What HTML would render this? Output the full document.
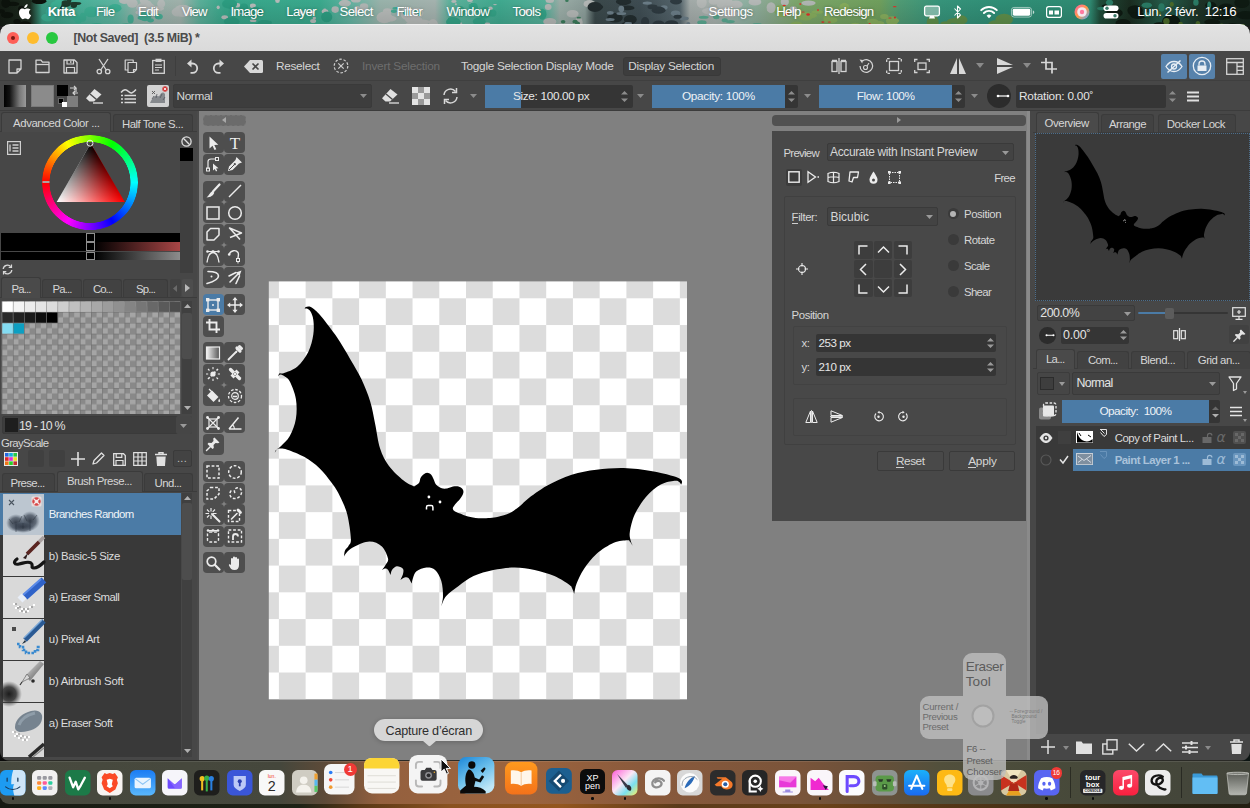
<!DOCTYPE html>
<html lang="fr">
<head>
<meta charset="utf-8">
<title>Krita</title>
<style>
*{box-sizing:border-box;margin:0;padding:0}
html,body{width:1250px;height:808px;overflow:hidden;background:#1c1c1c}
body{font-family:"Liberation Sans",sans-serif;font-size:12px;color:#dcdcdc;position:relative}
.abs{position:absolute}
#wall-top{left:0;top:0;width:1250px;height:26px;overflow:hidden;background:#2f8e76}
.menu{color:#fff;white-space:nowrap;text-shadow:0 0 3px rgba(0,0,0,.35)}
#titlebar{left:0;top:24px;width:1250px;height:27px;background:linear-gradient(180deg,#e2e2e2,#dadada);border-radius:10px 10px 0 0;border-top:1px solid #f0f0f0}
#title{left:73.5px;top:24.8px;height:27px;line-height:27px;font-weight:bold;font-size:12.4px;letter-spacing:-.4px;color:#4b4b4b;white-space:pre}
.tl{width:12px;height:12px;border-radius:50%;top:32px}
#tb1{left:0;top:51px;width:1250px;height:30px;background:#474747;border-bottom:1px solid #3f3f3f}
#tb2{left:0;top:81px;width:1250px;height:30px;background:#474747;border-bottom:1px solid #3c3c3c}
.t{white-space:nowrap;color:#d6d6d6}
#leftdock{left:0;top:111px;width:197px;height:651px;background:#474747}
#canvasarea{left:197px;top:111px;width:836px;height:651px;background:#808080}
#rightdock{left:1033px;top:111px;width:217px;height:651px;background:#474747}
#dockbg{left:0;top:762px;width:1250px;height:46px;background:linear-gradient(180deg,#4a4638 0,#3a382e 60%,#5a3a22 85%,#7a4a22 100%)}
svg{position:absolute;overflow:visible}
</style>
</head>
<body>
<!-- ============ macOS menu bar ============ -->
<div id="wall-top" class="abs"><svg style="left:0;top:0" width="1250" height="26" viewBox="0 0 1250 26"><defs><linearGradient id="wg" x1="0" x2="1250" gradientUnits="userSpaceOnUse"><stop offset="0.0000" stop-color="#141c14"/><stop offset="0.0240" stop-color="#1c2a1e"/><stop offset="0.0336" stop-color="#3a9a82"/><stop offset="0.0640" stop-color="#48b098"/><stop offset="0.0944" stop-color="#5fb4a0"/><stop offset="0.1080" stop-color="#8fb2a8"/><stop offset="0.1440" stop-color="#9fb0aa"/><stop offset="0.1600" stop-color="#5aae98"/><stop offset="0.1800" stop-color="#37a68a"/><stop offset="0.2560" stop-color="#3aa88c"/><stop offset="0.2800" stop-color="#62b2a0"/><stop offset="0.3040" stop-color="#98b2aa"/><stop offset="0.3480" stop-color="#a4b2ae"/><stop offset="0.3600" stop-color="#5cb09a"/><stop offset="0.4000" stop-color="#3fa88e"/><stop offset="0.4360" stop-color="#55ae98"/><stop offset="0.4480" stop-color="#9aaca6"/><stop offset="0.4680" stop-color="#8a9c98"/><stop offset="0.4760" stop-color="#3a484a"/><stop offset="0.5120" stop-color="#3e4c52"/><stop offset="0.5440" stop-color="#55656c"/><stop offset="0.5520" stop-color="#a2aaa8"/><stop offset="0.5720" stop-color="#a6b0ac"/><stop offset="0.5960" stop-color="#8fb0a2"/><stop offset="0.6120" stop-color="#8aa890"/><stop offset="0.6400" stop-color="#7aa468"/><stop offset="0.7040" stop-color="#6f9e5c"/><stop offset="0.7200" stop-color="#4f9a74"/><stop offset="0.7520" stop-color="#36937a"/><stop offset="0.8000" stop-color="#2f8e76"/><stop offset="0.8720" stop-color="#2f8a72"/><stop offset="0.8800" stop-color="#1f4a38"/><stop offset="0.9040" stop-color="#1a2c20"/><stop offset="0.9320" stop-color="#255c4a"/><stop offset="0.9600" stop-color="#1c3226"/><stop offset="1.0000" stop-color="#16241c"/></linearGradient><linearGradient id="wv" x1="0" y1="0" x2="0" y2="1"><stop offset="0" stop-color="#000" stop-opacity="0"/><stop offset="1" stop-color="#000" stop-opacity=".12"/></linearGradient></defs><rect width="1250" height="26" fill="url(#wg)"/><ellipse cx="13.0" cy="3.9" rx="6.3" ry="2.1" fill="#0c120c"/><ellipse cx="21.4" cy="9.5" rx="3.3" ry="3.7" fill="#0c120c"/><ellipse cx="1.5" cy="11.3" rx="3.3" ry="2.1" fill="#0c120c"/><ellipse cx="17.0" cy="21.5" rx="3.6" ry="2.6" fill="#0c120c"/><ellipse cx="25.1" cy="24.6" rx="5.9" ry="3.3" fill="#0c120c"/><ellipse cx="39.1" cy="1.2" rx="7.3" ry="2.9" fill="#0c120c"/><ellipse cx="5.8" cy="3.1" rx="4.5" ry="4.9" fill="#0c120c"/><ellipse cx="7.2" cy="15.1" rx="6.2" ry="3.2" fill="#0c120c"/><ellipse cx="69.2" cy="0.8" rx="2.2" ry="1.8" fill="#1e3a2c"/><ellipse cx="73.8" cy="5.1" rx="3.3" ry="3.0" fill="#1e3a2c"/><ellipse cx="65.9" cy="3.6" rx="5.2" ry="3.3" fill="#1e3a2c"/><ellipse cx="58.5" cy="6.9" rx="4.1" ry="3.8" fill="#1e3a2c"/><ellipse cx="75.5" cy="3.5" rx="5.9" ry="1.6" fill="#1e3a2c"/><ellipse cx="78.4" cy="19.7" rx="3.8" ry="3.7" fill="#3cae92"/><ellipse cx="48.1" cy="17.4" rx="6.8" ry="4.0" fill="#3cae92"/><ellipse cx="115.0" cy="8.2" rx="6.5" ry="4.1" fill="#3cae92"/><ellipse cx="91.4" cy="11.9" rx="7.2" ry="5.4" fill="#3cae92"/><ellipse cx="82.9" cy="17.3" rx="3.3" ry="4.5" fill="#3cae92"/><ellipse cx="96.8" cy="25.8" rx="7.1" ry="2.9" fill="#3cae92"/><ellipse cx="75.9" cy="17.4" rx="3.1" ry="3.6" fill="#3cae92"/><ellipse cx="58.4" cy="3.0" rx="3.3" ry="4.7" fill="#3cae92"/><ellipse cx="55.3" cy="6.4" rx="5.0" ry="5.1" fill="#3cae92"/><ellipse cx="51.4" cy="11.7" rx="5.7" ry="5.2" fill="#3cae92"/><ellipse cx="177.3" cy="12.1" rx="5.7" ry="4.3" fill="#b2b8b6"/><ellipse cx="145.1" cy="12.4" rx="9.7" ry="3.1" fill="#b2b8b6"/><ellipse cx="132.3" cy="3.2" rx="5.4" ry="4.6" fill="#b2b8b6"/><ellipse cx="161.2" cy="3.7" rx="4.0" ry="4.3" fill="#b2b8b6"/><ellipse cx="145.8" cy="7.9" rx="9.7" ry="5.6" fill="#b2b8b6"/><ellipse cx="156.1" cy="8.6" rx="8.1" ry="2.6" fill="#b2b8b6"/><ellipse cx="183.0" cy="10.9" rx="9.2" ry="6.1" fill="#b2b8b6"/><ellipse cx="147.5" cy="5.6" rx="4.6" ry="5.3" fill="#b2b8b6"/><ellipse cx="124.4" cy="0.9" rx="5.3" ry="3.1" fill="#b2b8b6"/><ellipse cx="143.8" cy="0.7" rx="4.0" ry="3.1" fill="#b2b8b6"/><ellipse cx="130.6" cy="19.0" rx="3.1" ry="4.5" fill="#46ac94"/><ellipse cx="158.8" cy="16.6" rx="4.0" ry="2.9" fill="#46ac94"/><ellipse cx="145.0" cy="16.4" rx="6.4" ry="4.9" fill="#46ac94"/><ellipse cx="150.6" cy="20.3" rx="3.3" ry="2.1" fill="#46ac94"/><ellipse cx="143.8" cy="17.9" rx="6.3" ry="2.3" fill="#46ac94"/><ellipse cx="126.3" cy="25.5" rx="5.1" ry="2.3" fill="#46ac94"/><ellipse cx="277.5" cy="0.7" rx="2.3" ry="2.4" fill="#b4bab8"/><ellipse cx="314.3" cy="18.1" rx="1.7" ry="1.3" fill="#b4bab8"/><ellipse cx="234.2" cy="20.1" rx="2.3" ry="2.0" fill="#b4bab8"/><ellipse cx="252.9" cy="5.8" rx="3.0" ry="2.4" fill="#b4bab8"/><ellipse cx="313.1" cy="21.0" rx="3.0" ry="2.0" fill="#b4bab8"/><ellipse cx="241.1" cy="13.5" rx="1.9" ry="0.7" fill="#b4bab8"/><ellipse cx="218.2" cy="7.3" rx="1.6" ry="1.9" fill="#b4bab8"/><ellipse cx="325.0" cy="11.6" rx="3.3" ry="2.4" fill="#b4bab8"/><ellipse cx="324.8" cy="9.5" rx="1.6" ry="1.0" fill="#b4bab8"/><ellipse cx="237.6" cy="5.3" rx="2.6" ry="2.3" fill="#b4bab8"/><ellipse cx="311.7" cy="12.5" rx="2.6" ry="2.1" fill="#b4bab8"/><ellipse cx="224.7" cy="17.2" rx="3.3" ry="2.0" fill="#b4bab8"/><ellipse cx="301.3" cy="12.4" rx="1.4" ry="2.1" fill="#b4bab8"/><ellipse cx="253.2" cy="20.8" rx="3.4" ry="1.3" fill="#b4bab8"/><ellipse cx="261.2" cy="24.6" rx="6.6" ry="2.4" fill="#2c9c80"/><ellipse cx="229.6" cy="3.9" rx="7.5" ry="4.9" fill="#2c9c80"/><ellipse cx="231.8" cy="21.5" rx="7.9" ry="4.3" fill="#2c9c80"/><ellipse cx="255.3" cy="14.3" rx="3.7" ry="1.9" fill="#2c9c80"/><ellipse cx="326.7" cy="16.9" rx="5.6" ry="5.3" fill="#2c9c80"/><ellipse cx="264.9" cy="22.7" rx="7.1" ry="2.6" fill="#2c9c80"/><ellipse cx="244.0" cy="7.6" rx="4.2" ry="4.0" fill="#2c9c80"/><ellipse cx="244.8" cy="10.9" rx="3.7" ry="5.3" fill="#2c9c80"/><ellipse cx="255.7" cy="11.9" rx="5.9" ry="5.2" fill="#2c9c80"/><ellipse cx="263.4" cy="23.9" rx="5.5" ry="3.8" fill="#2c9c80"/><ellipse cx="355.9" cy="0.2" rx="4.8" ry="2.4" fill="#b0b6b4"/><ellipse cx="335.2" cy="9.6" rx="3.7" ry="3.3" fill="#b0b6b4"/><ellipse cx="364.0" cy="6.7" rx="4.3" ry="3.4" fill="#b0b6b4"/><ellipse cx="357.2" cy="9.4" rx="3.4" ry="3.5" fill="#b0b6b4"/><ellipse cx="344.9" cy="3.3" rx="6.1" ry="3.4" fill="#b0b6b4"/><ellipse cx="413.7" cy="19.8" rx="8.6" ry="4.1" fill="#b6bab8"/><ellipse cx="416.8" cy="13.1" rx="6.6" ry="5.1" fill="#b6bab8"/><ellipse cx="407.1" cy="13.9" rx="6.4" ry="6.1" fill="#b6bab8"/><ellipse cx="422.0" cy="22.8" rx="8.7" ry="3.4" fill="#b6bab8"/><ellipse cx="413.6" cy="24.5" rx="8.2" ry="2.9" fill="#b6bab8"/><ellipse cx="387.3" cy="11.5" rx="4.4" ry="3.3" fill="#b6bab8"/><ellipse cx="384.4" cy="17.4" rx="7.9" ry="5.9" fill="#b6bab8"/><ellipse cx="389.3" cy="18.6" rx="7.3" ry="3.0" fill="#b6bab8"/><ellipse cx="433.0" cy="25.2" rx="5.1" ry="6.1" fill="#b6bab8"/><ellipse cx="406.9" cy="12.7" rx="4.0" ry="2.5" fill="#46aa92"/><ellipse cx="393.9" cy="11.2" rx="3.0" ry="1.7" fill="#46aa92"/><ellipse cx="395.8" cy="8.3" rx="3.4" ry="1.2" fill="#46aa92"/><ellipse cx="415.5" cy="11.5" rx="2.0" ry="1.7" fill="#46aa92"/><ellipse cx="419.3" cy="13.3" rx="2.1" ry="2.8" fill="#46aa92"/><ellipse cx="428.4" cy="25.3" rx="2.2" ry="1.6" fill="#46aa92"/><ellipse cx="449.0" cy="20.3" rx="1.7" ry="0.8" fill="#b2b8b6"/><ellipse cx="487.2" cy="23.7" rx="3.0" ry="1.1" fill="#b2b8b6"/><ellipse cx="459.9" cy="23.9" rx="2.4" ry="1.9" fill="#b2b8b6"/><ellipse cx="453.9" cy="1.5" rx="2.7" ry="1.4" fill="#b2b8b6"/><ellipse cx="452.2" cy="24.4" rx="2.6" ry="2.1" fill="#b2b8b6"/><ellipse cx="453.4" cy="22.3" rx="1.2" ry="2.2" fill="#b2b8b6"/><ellipse cx="490.4" cy="8.8" rx="2.4" ry="2.3" fill="#b2b8b6"/><ellipse cx="471.8" cy="3.4" rx="2.3" ry="1.0" fill="#b2b8b6"/><ellipse cx="455.9" cy="4.2" rx="1.1" ry="1.0" fill="#b2b8b6"/><ellipse cx="476.2" cy="7.9" rx="2.9" ry="1.1" fill="#b2b8b6"/><ellipse cx="495.0" cy="4.6" rx="1.9" ry="0.6" fill="#b2b8b6"/><ellipse cx="470.0" cy="0.4" rx="2.8" ry="1.6" fill="#b2b8b6"/><ellipse cx="463.9" cy="12.3" rx="3.3" ry="0.8" fill="#b2b8b6"/><ellipse cx="526.9" cy="11.2" rx="2.2" ry="2.1" fill="#b2b8b6"/><ellipse cx="484.3" cy="13.2" rx="6.4" ry="5.5" fill="#34a286"/><ellipse cx="479.3" cy="21.6" rx="6.5" ry="4.2" fill="#34a286"/><ellipse cx="485.5" cy="9.0" rx="3.3" ry="2.3" fill="#34a286"/><ellipse cx="452.1" cy="19.3" rx="4.3" ry="2.4" fill="#34a286"/><ellipse cx="453.4" cy="21.9" rx="7.4" ry="4.3" fill="#34a286"/><ellipse cx="473.2" cy="6.3" rx="4.5" ry="3.5" fill="#34a286"/><ellipse cx="460.8" cy="11.6" rx="4.3" ry="5.5" fill="#34a286"/><ellipse cx="542.3" cy="14.2" rx="4.2" ry="5.5" fill="#34a286"/><ellipse cx="476.0" cy="9.3" rx="3.0" ry="3.3" fill="#34a286"/><ellipse cx="492.5" cy="13.1" rx="4.0" ry="3.7" fill="#34a286"/><ellipse cx="548.2" cy="6.9" rx="3.4" ry="3.0" fill="#b2b6b4"/><ellipse cx="549.8" cy="0.6" rx="4.2" ry="2.5" fill="#b2b6b4"/><ellipse cx="572.6" cy="13.8" rx="6.0" ry="3.8" fill="#b2b6b4"/><ellipse cx="578.1" cy="22.9" rx="4.6" ry="2.8" fill="#b2b6b4"/><ellipse cx="589.4" cy="3.9" rx="5.9" ry="3.8" fill="#b2b6b4"/><ellipse cx="549.8" cy="21.7" rx="6.6" ry="3.7" fill="#b2b6b4"/><ellipse cx="578.8" cy="21.1" rx="3.6" ry="3.4" fill="#b2b6b4"/><ellipse cx="575.1" cy="21.7" rx="2.7" ry="1.9" fill="#3a7a5a"/><ellipse cx="577.5" cy="23.2" rx="2.5" ry="1.7" fill="#3a7a5a"/><ellipse cx="566.9" cy="0.8" rx="1.7" ry="1.3" fill="#3a7a5a"/><ellipse cx="563.1" cy="21.7" rx="2.3" ry="1.7" fill="#3a7a5a"/><ellipse cx="578.8" cy="17.7" rx="2.2" ry="0.9" fill="#3a7a5a"/><ellipse cx="630.3" cy="19.5" rx="6.5" ry="4.5" fill="#222c2e"/><ellipse cx="623.6" cy="1.7" rx="7.7" ry="3.4" fill="#222c2e"/><ellipse cx="595.6" cy="6.9" rx="7.6" ry="3.2" fill="#222c2e"/><ellipse cx="627.5" cy="25.4" rx="6.5" ry="3.9" fill="#222c2e"/><ellipse cx="615.0" cy="17.8" rx="7.8" ry="4.8" fill="#222c2e"/><ellipse cx="622.9" cy="2.0" rx="4.7" ry="3.4" fill="#222c2e"/><ellipse cx="627.7" cy="7.9" rx="6.8" ry="2.4" fill="#222c2e"/><ellipse cx="594.9" cy="7.0" rx="7.4" ry="5.1" fill="#222c2e"/><ellipse cx="664.1" cy="7.6" rx="3.5" ry="2.3" fill="#6a7c86"/><ellipse cx="647.3" cy="3.1" rx="4.7" ry="1.7" fill="#6a7c86"/><ellipse cx="688.3" cy="24.3" rx="2.1" ry="2.3" fill="#6a7c86"/><ellipse cx="675.6" cy="25.2" rx="3.3" ry="1.8" fill="#6a7c86"/><ellipse cx="626.8" cy="24.6" rx="2.6" ry="2.5" fill="#6a7c86"/><ellipse cx="621.3" cy="13.6" rx="4.9" ry="1.5" fill="#6a7c86"/><ellipse cx="675.6" cy="13.2" rx="4.7" ry="2.8" fill="#6a7c86"/><ellipse cx="628.5" cy="23.3" rx="3.5" ry="1.3" fill="#6a7c86"/><ellipse cx="610.3" cy="12.8" rx="3.4" ry="1.9" fill="#6a7c86"/><ellipse cx="621.3" cy="8.9" rx="2.9" ry="3.1" fill="#6a7c86"/><ellipse cx="610.1" cy="19.5" rx="4.5" ry="1.5" fill="#6a7c86"/><ellipse cx="684.1" cy="18.5" rx="4.7" ry="1.9" fill="#6a7c86"/><ellipse cx="658.6" cy="10.2" rx="7.0" ry="3.6" fill="#2e3a40"/><ellipse cx="658.0" cy="11.1" rx="4.1" ry="1.9" fill="#2e3a40"/><ellipse cx="645.1" cy="21.7" rx="4.1" ry="4.7" fill="#2e3a40"/><ellipse cx="652.5" cy="6.9" rx="5.0" ry="2.4" fill="#2e3a40"/><ellipse cx="658.7" cy="24.9" rx="6.5" ry="4.3" fill="#2e3a40"/><ellipse cx="671.5" cy="23.7" rx="6.8" ry="3.5" fill="#2e3a40"/><ellipse cx="676.0" cy="1.3" rx="5.9" ry="3.2" fill="#2e3a40"/><ellipse cx="677.6" cy="16.8" rx="4.1" ry="2.0" fill="#2e3a40"/><ellipse cx="754.9" cy="1.9" rx="6.4" ry="3.7" fill="#b4b8b6"/><ellipse cx="710.8" cy="11.1" rx="8.9" ry="3.4" fill="#b4b8b6"/><ellipse cx="735.9" cy="4.5" rx="6.8" ry="3.9" fill="#b4b8b6"/><ellipse cx="701.7" cy="2.4" rx="5.0" ry="5.9" fill="#b4b8b6"/><ellipse cx="724.8" cy="3.3" rx="8.5" ry="6.3" fill="#b4b8b6"/><ellipse cx="721.5" cy="2.1" rx="5.0" ry="2.8" fill="#b4b8b6"/><ellipse cx="713.9" cy="1.4" rx="5.2" ry="3.4" fill="#b4b8b6"/><ellipse cx="729.9" cy="13.3" rx="7.7" ry="4.0" fill="#b4b8b6"/><ellipse cx="724.8" cy="20.3" rx="3.1" ry="2.0" fill="#5aa890"/><ellipse cx="703.7" cy="17.3" rx="4.9" ry="1.5" fill="#5aa890"/><ellipse cx="730.2" cy="21.6" rx="4.6" ry="1.7" fill="#5aa890"/><ellipse cx="716.3" cy="17.0" rx="3.2" ry="2.2" fill="#5aa890"/><ellipse cx="757.2" cy="24.2" rx="4.6" ry="1.3" fill="#5aa890"/><ellipse cx="701.9" cy="22.5" rx="4.7" ry="2.3" fill="#5aa890"/><ellipse cx="844.3" cy="8.0" rx="5.0" ry="5.3" fill="#86ac5c"/><ellipse cx="876.5" cy="23.4" rx="7.9" ry="2.7" fill="#86ac5c"/><ellipse cx="779.7" cy="10.8" rx="5.6" ry="4.4" fill="#86ac5c"/><ellipse cx="892.1" cy="21.0" rx="6.2" ry="4.7" fill="#86ac5c"/><ellipse cx="826.7" cy="17.9" rx="3.2" ry="4.8" fill="#86ac5c"/><ellipse cx="796.4" cy="24.6" rx="6.2" ry="3.0" fill="#86ac5c"/><ellipse cx="782.3" cy="12.5" rx="6.2" ry="4.5" fill="#86ac5c"/><ellipse cx="780.1" cy="9.3" rx="5.6" ry="4.0" fill="#86ac5c"/><ellipse cx="817.4" cy="12.0" rx="6.0" ry="1.8" fill="#86ac5c"/><ellipse cx="805.7" cy="16.3" rx="7.8" ry="4.2" fill="#86ac5c"/><ellipse cx="884.3" cy="16.6" rx="4.2" ry="2.7" fill="#86ac5c"/><ellipse cx="894.7" cy="20.7" rx="4.5" ry="1.9" fill="#86ac5c"/><ellipse cx="832.3" cy="20.1" rx="5.1" ry="2.8" fill="#86ac5c"/><ellipse cx="855.1" cy="24.7" rx="4.1" ry="1.9" fill="#86ac5c"/><ellipse cx="810.6" cy="15.6" rx="6.4" ry="2.6" fill="#86ac5c"/><ellipse cx="872.6" cy="21.3" rx="5.5" ry="2.6" fill="#86ac5c"/><ellipse cx="808.5" cy="3.1" rx="7.1" ry="2.7" fill="#b0b6b2"/><ellipse cx="771.1" cy="7.6" rx="4.5" ry="5.4" fill="#b0b6b2"/><ellipse cx="784.8" cy="1.9" rx="4.1" ry="3.4" fill="#b0b6b2"/><ellipse cx="793.3" cy="9.5" rx="3.7" ry="3.3" fill="#b0b6b2"/><ellipse cx="770.6" cy="9.7" rx="3.7" ry="2.0" fill="#b0b6b2"/><ellipse cx="787.2" cy="12.7" rx="1.7" ry="1.2" fill="#e0302a"/><ellipse cx="867.9" cy="25.9" rx="1.7" ry="0.7" fill="#e0302a"/><ellipse cx="802.3" cy="24.6" rx="1.5" ry="0.5" fill="#e0302a"/><ellipse cx="859.7" cy="12.3" rx="1.2" ry="0.7" fill="#e0302a"/><ellipse cx="800.3" cy="4.1" rx="1.1" ry="0.8" fill="#e0302a"/><ellipse cx="894.7" cy="6.7" rx="1.8" ry="0.6" fill="#e0302a"/><ellipse cx="822.8" cy="22.1" rx="1.6" ry="0.8" fill="#e0302a"/><ellipse cx="785.9" cy="14.4" rx="1.2" ry="1.2" fill="#e0302a"/><ellipse cx="803.2" cy="12.0" rx="1.7" ry="0.5" fill="#e0302a"/><ellipse cx="829.3" cy="21.9" rx="1.6" ry="0.5" fill="#e0302a"/><ellipse cx="784.2" cy="5.4" rx="1.7" ry="0.7" fill="#e0302a"/><ellipse cx="869.7" cy="23.8" rx="1.1" ry="0.7" fill="#e0302a"/><ellipse cx="894.9" cy="17.6" rx="1.1" ry="1.0" fill="#e0302a"/><ellipse cx="818.0" cy="10.1" rx="0.8" ry="1.1" fill="#e0302a"/><ellipse cx="890.0" cy="17.9" rx="1.7" ry="0.5" fill="#e0302a"/><ellipse cx="808.1" cy="14.5" rx="1.8" ry="1.2" fill="#e0302a"/><ellipse cx="960.9" cy="20.0" rx="6.6" ry="4.7" fill="#5e8e4a"/><ellipse cx="1004.2" cy="19.5" rx="8.8" ry="5.8" fill="#5e8e4a"/><ellipse cx="995.8" cy="24.2" rx="7.6" ry="3.9" fill="#5e8e4a"/><ellipse cx="955.6" cy="20.9" rx="8.7" ry="2.8" fill="#5e8e4a"/><ellipse cx="945.8" cy="24.0" rx="5.5" ry="2.7" fill="#5e8e4a"/><ellipse cx="932.7" cy="22.4" rx="6.0" ry="6.9" fill="#5e8e4a"/><ellipse cx="1232.5" cy="25.7" rx="5.6" ry="2.8" fill="#0e1a12"/><ellipse cx="1114.5" cy="13.0" rx="8.3" ry="4.5" fill="#0e1a12"/><ellipse cx="1135.1" cy="10.8" rx="7.7" ry="5.5" fill="#0e1a12"/><ellipse cx="1212.2" cy="22.0" rx="8.0" ry="3.0" fill="#0e1a12"/><ellipse cx="1226.1" cy="7.6" rx="7.4" ry="4.1" fill="#0e1a12"/><ellipse cx="1210.7" cy="5.2" rx="5.5" ry="3.5" fill="#0e1a12"/><ellipse cx="1123.0" cy="23.0" rx="7.5" ry="3.9" fill="#0e1a12"/><ellipse cx="1159.4" cy="25.8" rx="7.0" ry="3.5" fill="#0e1a12"/><ellipse cx="1221.3" cy="17.0" rx="9.9" ry="2.9" fill="#0e1a12"/><ellipse cx="1171.2" cy="21.3" rx="9.0" ry="6.6" fill="#0e1a12"/><ellipse cx="1106.1" cy="7.6" rx="4.7" ry="3.3" fill="#0e1a12"/><ellipse cx="1245.9" cy="15.2" rx="9.6" ry="4.1" fill="#0e1a12"/><ellipse cx="1229.9" cy="11.7" rx="5.6" ry="6.0" fill="#0e1a12"/><ellipse cx="1241.9" cy="2.8" rx="7.6" ry="5.3" fill="#0e1a12"/><ellipse cx="1132.6" cy="9.6" rx="4.8" ry="3.3" fill="#0e1a12"/><ellipse cx="1138.2" cy="15.6" rx="7.9" ry="3.3" fill="#0e1a12"/><ellipse cx="1101.7" cy="8.5" rx="4.7" ry="1.8" fill="#2a7a64"/><ellipse cx="1146.8" cy="5.3" rx="5.2" ry="2.8" fill="#2a7a64"/><ellipse cx="1109.5" cy="2.6" rx="3.6" ry="2.9" fill="#2a7a64"/><ellipse cx="1195.9" cy="2.4" rx="2.7" ry="3.3" fill="#2a7a64"/><ellipse cx="1161.5" cy="7.4" rx="3.2" ry="4.1" fill="#2a7a64"/><ellipse cx="1146.9" cy="14.7" rx="3.4" ry="2.4" fill="#2a7a64"/><ellipse cx="1229.6" cy="25.9" rx="3.5" ry="1.8" fill="#2a7a64"/><ellipse cx="1209.2" cy="5.3" rx="2.0" ry="3.9" fill="#2a7a64"/><ellipse cx="1166.4" cy="21.3" rx="3.2" ry="3.2" fill="#4a6a2a"/><ellipse cx="1171.8" cy="4.2" rx="2.0" ry="2.5" fill="#4a6a2a"/><ellipse cx="1197.9" cy="23.7" rx="2.3" ry="2.6" fill="#4a6a2a"/><ellipse cx="1158.8" cy="13.1" rx="2.4" ry="1.9" fill="#4a6a2a"/><ellipse cx="1180.6" cy="24.1" rx="2.3" ry="2.3" fill="#4a6a2a"/><ellipse cx="1221.7" cy="25.1" rx="2.6" ry="1.5" fill="#4a6a2a"/><ellipse cx="1241.7" cy="25.4" rx="3.4" ry="1.3" fill="#4a6a2a"/><rect width="1250" height="26" fill="url(#wv)"/></svg></div>
<div id="menubar">
<svg style="left:18px;top:4px" width="14" height="16" viewBox="0 0 14 16"><path d="M9.6 0.3c.1 1-.3 1.9-.9 2.6-.6.7-1.500 1.200-2.400 1.100-.1-.9.3-1.900.9-2.500C7.800.8 8.800.3 9.600.3zM12.600 5.500c-.100.100-1.600.900-1.600 2.800 0 2.200 1.900 2.900 2 3-.000.100-.300 1.100-1 2.100-.600.900-1.300 1.800-2.300 1.800-1 0-1.300-.600-2.400-.600-1.200 0-1.500.600-2.400.600-1 0-1.700-.900-2.400-1.900C1.200 11.400.300 8.400 1.500 6.300c.600-1.100 1.700-1.700 2.900-1.700.900 0 1.800.600 2.400.600.600 0 1.600-.800 2.800-.700.500 0 1.900.200 3 1z" fill="#fff"/></svg>
<!-- status icons -->
<svg style="left:923px;top:5px" width="18" height="15" viewBox="0 0 18 15"><rect x="1.600" y="1.100" width="14.800" height="9.800" rx="1.800" fill="#fff" fill-opacity=".35" stroke="#fff" stroke-width="1.300"/><rect x="3" y="2.500" width="12" height="7" fill="#9fb5ae" opacity=".0"/><path d="M6 13.500h6l-1-2.500H7z" fill="#fff"/></svg>
<svg style="left:953px;top:4px" width="10" height="16" viewBox="0 0 10 16"><path d="M1.500 4.500l6 6.500-3 3V2l3 3-6 6.500" fill="none" stroke="#fff" stroke-width="1.100" stroke-linejoin="round"/></svg>
<svg style="left:980px;top:5px" width="18" height="14" viewBox="0 0 18 14"><path d="M1.200 5.200a11 11 0 0 1 15.600 0" fill="none" stroke="#fff" stroke-width="1.900" stroke-linecap="round"/><path d="M3.900 8a7.200 7.200 0 0 1 10.200 0" fill="none" stroke="#fff" stroke-width="1.900" stroke-linecap="round"/><path d="M6.600 10.700a3.400 3.400 0 0 1 4.800 0L9 13.200z" fill="#fff"/></svg>
<svg style="left:1010.5px;top:6.5px" width="24.5" height="10.5" viewBox="0 0 28 12"><rect x=".5" y=".5" width="23" height="11" rx="3" fill="none" stroke="#fff" stroke-opacity=".6"/><rect x="2" y="2" width="20" height="8" rx="1.700" fill="#fff"/><path d="M25 4v4c1.200-.3 1.600-1.200 1.600-2S26.200 4.300 25 4z" fill="#fff" fill-opacity=".7"/></svg>
<svg style="left:1046px;top:6px" width="16" height="12" viewBox="0 0 16 12"><rect x=".6" y=".6" width="14.800" height="10.800" rx="2.200" fill="none" stroke="#fff" stroke-width="1.200"/><rect x="3" y="4.500" width="4" height="4" fill="#fff"/><rect x="8.500" y="4.500" width="4.500" height="4" fill="#fff"/></svg>
<svg style="left:1074px;top:4px" width="16" height="16" viewBox="0 0 16 16"><defs><linearGradient id="sg" x1="0" y1="0" x2="1" y2="1"><stop offset="0" stop-color="#ff5fa8"/><stop offset=".5" stop-color="#ff9a4a"/><stop offset="1" stop-color="#4aa8ff"/></linearGradient></defs><circle cx="8" cy="8" r="7.500" fill="url(#sg)"/><circle cx="8" cy="8" r="4.800" fill="#f4e8ee"/><circle cx="8" cy="8" r="2.200" fill="#ff7aa0"/></svg>
<svg style="left:1103px;top:5px" width="16" height="14" viewBox="0 0 16 14"><rect x=".5" y=".5" width="15" height="5.600" rx="2.800" fill="#fff"/><circle cx="4" cy="3.300" r="1.700" fill="#3a7a68"/><rect x=".5" y="7.900" width="15" height="5.600" rx="2.800" fill="#fff"/><circle cx="12" cy="10.700" r="1.700" fill="#3a7a68"/></svg>


<span class="abs menu" style="left:47.7px;top:3.8px;line-height:16px;font-size:13.2px;letter-spacing:-0.63px;color:#fff;font-weight:bold;white-space:pre">Krita</span>
<span class="abs menu" style="left:96.1px;top:3.8px;line-height:16px;font-size:13.2px;letter-spacing:-0.79px;color:#fff;white-space:pre">File</span>
<span class="abs menu" style="left:138.1px;top:3.8px;line-height:16px;font-size:13.2px;letter-spacing:-0.73px;color:#fff;white-space:pre">Edit</span>
<span class="abs menu" style="left:181.8px;top:3.8px;line-height:16px;font-size:13.2px;letter-spacing:-0.86px;color:#fff;white-space:pre">View</span>
<span class="abs menu" style="left:230.5px;top:3.8px;line-height:16px;font-size:13.2px;letter-spacing:-0.81px;color:#fff;white-space:pre">Image</span>
<span class="abs menu" style="left:286.3px;top:3.8px;line-height:16px;font-size:13.2px;letter-spacing:-0.68px;color:#fff;white-space:pre">Layer</span>
<span class="abs menu" style="left:339.4px;top:3.8px;line-height:16px;font-size:13.2px;letter-spacing:-0.51px;color:#fff;white-space:pre">Select</span>
<span class="abs menu" style="left:396.5px;top:3.8px;line-height:16px;font-size:13.2px;letter-spacing:-0.6px;color:#fff;white-space:pre">Filter</span>
<span class="abs menu" style="left:446.4px;top:3.8px;line-height:16px;font-size:13.2px;letter-spacing:-0.72px;color:#fff;white-space:pre">Window</span>
<span class="abs menu" style="left:512.6px;top:3.8px;line-height:16px;font-size:13.2px;letter-spacing:-0.58px;color:#fff;white-space:pre">Tools</span>
<span class="abs menu" style="left:708.5px;top:3.8px;line-height:16px;font-size:13.2px;letter-spacing:-0.42px;color:#fff;white-space:pre">Settings</span>
<span class="abs menu" style="left:776.3px;top:3.8px;line-height:16px;font-size:13.2px;letter-spacing:-0.73px;color:#fff;white-space:pre">Help</span>
<span class="abs menu" style="left:824.1px;top:3.8px;line-height:16px;font-size:13.2px;letter-spacing:-0.81px;color:#fff;white-space:pre">Redesign</span>
<span class="abs menu" style="left:1137.2px;top:3.8px;line-height:16px;font-size:13.2px;letter-spacing:-0.35px;color:#fff;white-space:pre">Lun. 2 févr.  12:16</span>

</div>

<!-- ============ window title bar ============ -->
<div id="titlebar" class="abs"></div>
<div class="abs tl" style="left:7px;background:#fe5f57"></div>
<div class="abs" style="left:11px;top:36px;width:4px;height:4px;border-radius:50%;background:#7a1a14"></div>
<div class="abs tl" style="left:27px;background:#febc2e"></div>
<div class="abs tl" style="left:46px;background:#28c840"></div>
<div id="title" class="abs">[Not Saved]  (3.5 MiB) *</div>

<!-- ============ toolbars ============ -->
<div id="tb1" class="abs">
<!-- new -->
<svg style="left:8px;top:8px" width="14" height="15" viewBox="0 0 14 15"><path d="M1 1h12v9l-4 4H1z M13 10H9v4" fill="none" stroke="#d4d4d4" stroke-width="1.300" stroke-linejoin="round"/></svg>
<!-- open -->
<svg style="left:35px;top:8px" width="15" height="15" viewBox="0 0 15 15"><path d="M1 13.500V1.200h5l1.500 2H14v10.300z" fill="none" stroke="#d4d4d4" stroke-width="1.300" stroke-linejoin="round"/><path d="M1 5.500h13" stroke="#d4d4d4" stroke-width="1.300"/></svg>
<!-- save -->
<svg style="left:63px;top:8px" width="15" height="15" viewBox="0 0 15 15"><path d="M1 1h10.500L14 3.500V14H1z" fill="none" stroke="#d4d4d4" stroke-width="1.300" stroke-linejoin="round"/><path d="M4 1v4h6.500V1M7.800 2v2M3.500 14V8.500h8V14" fill="none" stroke="#d4d4d4" stroke-width="1.200"/></svg>
<!-- cut -->
<svg style="left:96px;top:7px" width="15" height="17" viewBox="0 0 15 17"><path d="M3 1l7.300 11M12 1L4.700 12" stroke="#d4d4d4" stroke-width="1.300" fill="none"/><circle cx="3.300" cy="13.500" r="2.200" fill="none" stroke="#d4d4d4" stroke-width="1.300"/><circle cx="11.700" cy="13.500" r="2.200" fill="none" stroke="#d4d4d4" stroke-width="1.300"/></svg>
<!-- copy -->
<svg style="left:124px;top:8px" width="14" height="15" viewBox="0 0 14 15"><path d="M4 3.500h8.500v7l-3 3H4z M12.500 10.500h-3v3" fill="none" stroke="#d4d4d4" stroke-width="1.200" stroke-linejoin="round"/><path d="M4 11H1.200V1h8v2.500" fill="none" stroke="#d4d4d4" stroke-width="1.200" stroke-linejoin="round"/></svg>
<!-- paste -->
<svg style="left:152px;top:7px" width="13" height="16" viewBox="0 0 13 16"><rect x=".7" y="2.500" width="11.600" height="12.800" fill="none" stroke="#d4d4d4" stroke-width="1.300"/><rect x="3.500" y=".7" width="6" height="3.300" fill="#d4d4d4"/><path d="M3 7h7M3 9.500h7M3 12h4" stroke="#d4d4d4" stroke-width="1.100"/></svg>
<div class="abs" style="left:175px;top:5px;width:1px;height:20px;background:#3e3e3e"></div>
<!-- undo -->
<svg style="left:186px;top:8px" width="13" height="16" viewBox="0 0 13 16"><path d="M3 4.500h3.500a4.700 4.700 0 0 1 0 9.400H4.500" fill="none" stroke="#d8d8d8" stroke-width="1.800"/><path d="M5.500 .5L1 4.500l4.500 4z" fill="#d8d8d8"/></svg>
<!-- redo -->
<svg style="left:212px;top:8px" width="13" height="16" viewBox="0 0 13 16"><path d="M10 4.500H6.500a4.700 4.700 0 0 0 0 9.400H8.500" fill="none" stroke="#d8d8d8" stroke-width="1.800"/><path d="M7.500 .5L12 4.500l-4.500 4z" fill="#d8d8d8"/></svg>
<!-- clear -->
<svg style="left:244px;top:9px" width="19" height="13" viewBox="0 0 19 13"><path d="M6 0h11.500a1.500 1.500 0 0 1 1.500 1.500v10a1.500 1.500 0 0 1-1.500 1.500H6L0 6.500z" fill="#d8d8d8"/><path d="M8.500 3.500l6 6M14.500 3.500l-6 6" stroke="#474747" stroke-width="1.600"/></svg>
<!-- deselect icon -->
<svg style="left:333px;top:7px" width="16" height="16" viewBox="0 0 16 16"><circle cx="8" cy="8" r="6.800" fill="none" stroke="#cfcfcf" stroke-width="1.200" stroke-dasharray="2.600 1.700"/><path d="M5.300 5.300l5.400 5.400M10.700 5.300l-5.400 5.400" stroke="#cfcfcf" stroke-width="1.200"/></svg>
<div class="abs" style="left:623px;top:5.5px;width:97.5px;height:19.5px;background:#3d3d3d;border-radius:3px;border:1px solid #393939"></div>
<!-- wrap around -->
<svg style="left:831px;top:7px" width="16" height="16" viewBox="0 0 16 16"><path d="M8 0v16" stroke="#d4d4d4" stroke-width="1.300"/><rect x="1" y="3.500" width="5" height="10" fill="none" stroke="#d4d4d4" stroke-width="1.300"/><rect x="10" y="3.500" width="5" height="10" fill="none" stroke="#d4d4d4" stroke-width="1.300"/><path d="M1 2.500h5M10 2.500h5" stroke="#d4d4d4" stroke-width="1.600"/></svg>
<!-- reset rotation -->
<svg style="left:858px;top:7px" width="16" height="16" viewBox="0 0 16 16"><path d="M4.200 3.200A6.300 6.300 0 1 1 2 8" fill="none" stroke="#d4d4d4" stroke-width="1.200"/><path d="M1.500 1.500l3.500.5-.8 3.500z" fill="#d4d4d4"/><circle cx="7.500" cy="9.500" r="2" fill="none" stroke="#d4d4d4" stroke-width="1.100"/><path d="M9 8l2-3" stroke="#d4d4d4" stroke-width="1.100"/></svg>
<!-- zoom to fit -->
<svg style="left:886px;top:7px" width="16" height="16" viewBox="0 0 16 16"><rect x="3.500" y="3.500" width="9" height="9" fill="none" stroke="#d4d4d4" stroke-width="1.300"/><path d="M.7 4V.7H4M12 .7h3.300V4M15.300 12v3.300H12M4 15.300H.7V12" fill="none" stroke="#d4d4d4" stroke-width="1.300" stroke-dasharray="2.500 1.200"/></svg>
<svg style="left:914px;top:7px" width="16" height="16" viewBox="0 0 16 16"><rect x="4" y="5" width="8" height="6.500" fill="none" stroke="#d4d4d4" stroke-width="1.300"/><path d="M.7 4V1.500H3.500M12.500 1.500h2.800V4M15.300 12v2.500h-2.800M3.500 14.500H.7V12" fill="none" stroke="#d4d4d4" stroke-width="1.300"/></svg>
<!-- mirror H -->
<svg style="left:950px;top:6px" width="16" height="18" viewBox="0 0 16 18"><path d="M7 1v16H0z" fill="#d8d8d8"/><path d="M9 1v16h7z" fill="#d8d8d8"/></svg>
<svg style="left:976px;top:12px" width="8" height="5" viewBox="0 0 8 5"><path d="M0 0h8L4 5z" fill="#8a8a8a"/></svg>
<!-- mirror V -->
<svg style="left:996px;top:6px" width="18" height="18" viewBox="0 0 18 18"><path d="M1 8V1l16 7z" fill="#d8d8d8"/><path d="M1 10v7l16-7z" fill="#d8d8d8"/></svg>
<svg style="left:1023px;top:12px" width="8" height="5" viewBox="0 0 8 5"><path d="M0 0h8L4 5z" fill="#8a8a8a"/></svg>
<!-- crop-like -->
<svg style="left:1040px;top:6px" width="18" height="18" viewBox="0 0 18 18"><path d="M6 1v11h11M1 5.500h11v11" fill="none" stroke="#d8d8d8" stroke-width="1.700"/></svg>
<!-- right buttons -->
<div class="abs" style="left:1161px;top:3px;width:26px;height:25px;background:#5782ab;border-radius:2px"></div>
<svg style="left:1165px;top:8px" width="18" height="15" viewBox="0 0 18 15"><path d="M1 7.500C3.500 3.500 6 2.500 9 2.500s5.500 1 8 5c-2.500 4-5 5-8 5s-5.500-1-8-5z" fill="none" stroke="#e8eef4" stroke-width="1.300"/><circle cx="9" cy="7.500" r="2.500" fill="none" stroke="#e8eef4" stroke-width="1.300"/><path d="M2.500 13.500L15.500 1.500" stroke="#e8eef4" stroke-width="1.500"/></svg>
<div class="abs" style="left:1189px;top:3px;width:26px;height:25px;background:#5782ab;border-radius:2px"></div>
<svg style="left:1192px;top:5px" width="20" height="20" viewBox="0 0 20 20"><circle cx="10" cy="10" r="8.700" fill="none" stroke="#e8eef4" stroke-width="1.300"/><rect x="5.500" y="9.500" width="9" height="5.500" fill="#e8eef4"/><path d="M7 9.500V8a3 3 0 0 1 6 0v1.500" fill="none" stroke="#e8eef4" stroke-width="1.300"/></svg>
<svg style="left:1226px;top:7px" width="18" height="17" viewBox="0 0 18 17"><rect x=".7" y=".7" width="16.600" height="15.600" fill="none" stroke="#d4d4d4" stroke-width="1.300"/><path d="M.7 4.500h16.600M11 4.500v11.800M11 8.500h6.300M11 12.300h6.300" stroke="#d4d4d4" stroke-width="1.300" fill="none"/></svg>


<span class="abs t" style="left:276px;top:7.3px;line-height:16px;font-size:11.8px;letter-spacing:-0.3px">Reselect</span>
<span class="abs t" style="left:362px;top:7.3px;line-height:16px;font-size:11.8px;letter-spacing:-0.21px;color:#6e6e6e">Invert Selection</span>
<span class="abs t" style="left:461px;top:7.3px;line-height:16px;font-size:11.8px;letter-spacing:-0.3px">Toggle Selection Display Mode</span>
<span class="abs t" style="left:628.2px;top:7.3px;line-height:16px;font-size:11.8px;letter-spacing:-0.28px">Display Selection</span>

</div>
<div id="tb2" class="abs">
<!-- gradient swatch -->
<div class="abs" style="left:4px;top:4px;width:22px;height:22px;background:linear-gradient(90deg,#000 0,#111 25%,#777 70%,#9a9a9a 100%)"></div>
<!-- pattern swatch -->
<div class="abs" style="left:31px;top:4px;width:23px;height:22px;background:#8b8b8b;border:1px solid #7a7a7a"></div>
<!-- fg / bg -->
<div class="abs" style="left:67px;top:15px;width:11px;height:11px;background:#7d7d7d"></div>
<div class="abs" style="left:57px;top:4px;width:11px;height:11px;background:#000"></div>
<div class="abs" style="left:58px;top:17px;width:6px;height:6px;background:#000;border:1px solid #666"></div>
<div class="abs" style="left:62px;top:21px;width:5px;height:5px;background:#fff"></div>
<svg style="left:69px;top:4px" width="10" height="10" viewBox="0 0 10 10"><path d="M1 3h6M5 1l2 2-2 2M9 8H4M6 6L4 8l2 2" fill="none" stroke="#cfcfcf" stroke-width="1.200"/><path d="M7 3v4" stroke="#cfcfcf" stroke-width="1.200"/></svg>
<!-- eraser -->
<svg style="left:85px;top:7px" width="19" height="16" viewBox="0 0 19 16"><path d="M9.500 1l7 5.500-7.500 7H4.500l-3.500-3.200z" fill="#e0e0e0"/><path d="M5 6l6.500 5.500" stroke="#474747" stroke-width="1.300"/><path d="M8 15h10" stroke="#e0e0e0" stroke-width="1.300"/></svg>
<!-- preset list icon -->
<svg style="left:120px;top:6px" width="17" height="18" viewBox="0 0 17 18"><path d="M1 5.500c3-3.500 5-3.500 7.500-1s4.500 1.500 7.500-2" fill="none" stroke="#d8d8d8" stroke-width="1.500"/><path d="M4.500 8.500H16M4.500 12H16M4.500 15.500H16" stroke="#d8d8d8" stroke-width="1.600"/><path d="M1 8.500h2M1 12h2M1 15.500h2" stroke="#d8d8d8" stroke-width="1.600"/></svg>
<!-- brush preset thumb -->
<div class="abs" style="left:147px;top:4px;width:22px;height:22px;background:#d2d2d2;border-radius:2px"></div>
<svg style="left:147px;top:4px" width="22" height="22" viewBox="0 0 22 22"><path d="M3 18c2-4 3-6 5-7s3 2 5-1 3-3 5-1v9H3z" fill="#6c7076" opacity=".75"/><path d="M5 14l2-3M9 13l1-4M13 13l2-4M16 15l2-3" stroke="#54585e" stroke-width=".8"/><path d="M5 6l3 3M8 6l-3 3" stroke="#555" stroke-width=".9"/><circle cx="18" cy="4" r="2.700" fill="#d23a3a"/><path d="M16.800 2.800l2.400 2.400M19.200 2.800l-2.400 2.400" stroke="#fff" stroke-width=".8"/></svg>
<!-- blend mode combobox -->
<div class="abs" style="left:173px;top:3px;width:199px;height:24px;background:#3d3d3d;border:1px solid #3a3a3a;border-radius:2px"></div>
<svg style="left:360px;top:13px" width="7" height="4" viewBox="0 0 7 4"><path d="M0 0h7L3.500 4z" fill="#8c8c8c"/></svg>
<!-- eraser mode -->
<svg style="left:381px;top:7px" width="19" height="16" viewBox="0 0 19 16"><path d="M9.500 1l7 5.500-7.500 7H4.500l-3.500-3.200z" fill="#e0e0e0"/><path d="M5 6l6.500 5.500" stroke="#474747" stroke-width="1.300"/><path d="M8 15h10" stroke="#e0e0e0" stroke-width="1.300"/></svg>
<!-- preserve alpha checker -->
<svg style="left:412px;top:6px" width="18" height="18" viewBox="0 0 18 18"><rect width="18" height="18" fill="#9a9a9a"/><path d="M0 0h6v6H0zM12 0h6v6h-6zM6 6h6v6H6zM0 12h6v6H0zM12 12h6v6h-6z" fill="#e4e4e4"/></svg>
<!-- reload -->
<svg style="left:442px;top:6px" width="17" height="18" viewBox="0 0 17 18"><path d="M2 8a6.500 6.500 0 0 1 11.500-3.500M15 10a6.500 6.500 0 0 1-11.500 3.500" fill="none" stroke="#d8d8d8" stroke-width="1.500"/><path d="M14.500 1v4.500H10M2.500 17v-4.500H7" fill="none" stroke="#d8d8d8" stroke-width="1.500"/></svg>
<svg style="left:470px;top:13px" width="7" height="4" viewBox="0 0 7 4"><path d="M0 0h7L3.500 4z" fill="#8c8c8c"/></svg>
<!-- size slider -->
<div class="abs" style="left:485px;top:4px;width:148px;height:23px;background:#353535;border-radius:2px"></div>
<div class="abs" style="left:485px;top:4px;width:36px;height:23px;background:#4b7ba6"></div>
<svg style="left:621px;top:9px" width="7" height="13" viewBox="0 0 7 13"><path d="M0 4.500h7L3.500 1zM0 8.500h7L3.500 12z" fill="#8c8c8c"/></svg>
<svg style="left:637px;top:13px" width="7" height="4" viewBox="0 0 7 4"><path d="M0 0h7L3.500 4z" fill="#8c8c8c"/></svg>
<!-- opacity slider -->
<div class="abs" style="left:652px;top:4px;width:146px;height:23px;background:#353535;border-radius:2px"></div>
<div class="abs" style="left:652px;top:4px;width:133px;height:23px;background:#4b7ba6"></div>
<svg style="left:788px;top:9px" width="7" height="13" viewBox="0 0 7 13"><path d="M0 4.500h7L3.500 1zM0 8.500h7L3.500 12z" fill="#8c8c8c"/></svg>
<svg style="left:804px;top:13px" width="7" height="4" viewBox="0 0 7 4"><path d="M0 0h7L3.500 4z" fill="#8c8c8c"/></svg>
<!-- flow slider -->
<div class="abs" style="left:819px;top:4px;width:146px;height:23px;background:#353535;border-radius:2px"></div>
<div class="abs" style="left:819px;top:4px;width:133px;height:23px;background:#4b7ba6"></div>
<svg style="left:955px;top:9px" width="7" height="13" viewBox="0 0 7 13"><path d="M0 4.500h7L3.500 1zM0 8.500h7L3.500 12z" fill="#8c8c8c"/></svg>
<svg style="left:971px;top:13px" width="7" height="4" viewBox="0 0 7 4"><path d="M0 0h7L3.500 4z" fill="#8c8c8c"/></svg>
<!-- rotation -->
<div class="abs" style="left:1016px;top:4px;width:150px;height:23px;background:#353535;border-radius:2px"></div>
<div class="abs" style="left:987px;top:3px;width:24px;height:24px;border-radius:50%;background:#2c2c2c"></div>
<svg style="left:987px;top:3px" width="24" height="24" viewBox="0 0 24 24"><path d="M11 12h10" stroke="#fff" stroke-width="1.200"/><circle cx="11" cy="12" r="1.300" fill="#fff"/><circle cx="21" cy="12" r="1.300" fill="#fff"/></svg>
<svg style="left:1169px;top:9px" width="7" height="13" viewBox="0 0 7 13"><path d="M0 4.500h7L3.500 1zM0 8.500h7L3.500 12z" fill="#8c8c8c"/></svg>
<svg style="left:1187px;top:10px" width="12" height="11" viewBox="0 0 12 11"><path d="M0 1.500h12M0 5.500h12M0 9.500h12" stroke="#e0e0e0" stroke-width="1.800"/></svg>


<span class="abs t" style="left:176.5px;top:7.3px;line-height:16px;font-size:11.8px;letter-spacing:-0.36px">Normal</span>
<span class="abs t" style="left:513px;top:7.3px;line-height:16px;font-size:11.8px;letter-spacing:-0.34px;color:#e8e8e8">Size: 100.00 px</span>
<span class="abs t" style="left:681.9px;top:7.3px;line-height:16px;font-size:11.8px;letter-spacing:-0.29px;color:#eef2f6">Opacity: 100%</span>
<span class="abs t" style="left:856.8px;top:7.3px;line-height:16px;font-size:11.8px;letter-spacing:-0.38px;color:#eef2f6">Flow: 100%</span>
<span class="abs t" style="left:1019px;top:7.3px;line-height:16px;font-size:11.8px;letter-spacing:-0.21px;color:#e4e4e4">Rotation: 0.00˚</span>

</div>

<!-- ============ left dockers ============ -->
<div id="leftdock" class="abs">
<div class="abs" style="left:0px;top:20px;width:197px;height:1px;background:#3b3b3b"></div>
<div class="abs" style="left:1px;top:1px;width:110px;height:20px;background:#4a4a4a;border:1px solid #3b3b3b;border-bottom:none;border-radius:3px 3px 0 0"></div>
<div class="abs" style="left:113px;top:3px;width:80px;height:17px;background:#424242;border:1px solid #3b3b3b;border-bottom:none;border-radius:3px 3px 0 0"></div>
<span class="abs t" style="left:13px;top:3.5px;line-height:16px;font-size:11.4px;letter-spacing:-0.4px">Advanced Color ...</span>
<span class="abs t" style="left:122px;top:4.5px;line-height:16px;font-size:11.4px;letter-spacing:-0.51px">Half Tone S...</span>
<div class="abs" style="left:180px;top:50px;width:12.6px;height:112px;background:#3f3f3f"></div>
<div class="abs" style="left:180px;top:37px;width:13px;height:13px;background:#000"></div>
<svg style="left:181px;top:25px" width="11" height="11" viewBox="0 0 11 11"><circle cx="5.5" cy="5.5" r="4.6" fill="none" stroke="#e0e0e0" stroke-width="1.3"/><path d="M2.300 2.300l6.400 6.400" stroke="#e0e0e0" stroke-width="1.300"/></svg>
<svg style="left:7px;top:30px" width="14" height="14" viewBox="0 0 14 14"><rect x=".6" y=".6" width="12.800" height="12.800" fill="none" stroke="#d0d0d0" stroke-width="1.200"/><path d="M3 3.500v7M5.500 4h6M5.500 7h6M5.500 10h6" stroke="#d0d0d0" stroke-width="1.300"/></svg>
<div class="abs" style="left:42.2px;top:23.8px;width:95.6px;height:95.6px;background:conic-gradient(from 270deg,#f00,#ff0,#0f0,#0ff,#00f,#f0f,#f00);border-radius:50%;-webkit-mask:radial-gradient(circle,transparent 40.2px,#000 40.8px);mask:radial-gradient(circle,transparent 40.2px,#000 40.8px)"></div>
<div class="abs" style="left:56.4px;top:32.6px;width:68.7px;height:58.9px;background:linear-gradient(180deg,#000 0,rgba(0,0,0,0) 100%),conic-gradient(from 140deg at 50% 0,#f00 0deg,#f00 10deg,#fff 70deg,#fff 80deg);clip-path:polygon(50% 0,0 100%,100% 100%)"></div>
<svg style="left:40px;top:22px" width="100" height="100" viewBox="40 133 100 100"><circle cx="90" cy="143.200" r="3" fill="none" stroke="#e8e8e8" stroke-width="1"/><path d="M42.500 182h7" stroke="#b0a0a0" stroke-width="2"/></svg>
<div class="abs" style="left:1px;top:122px;width:179px;height:8.5px;background:#000"></div>
<div class="abs" style="left:1px;top:131.3px;width:179px;height:8.5px;background:linear-gradient(90deg,#000 0,#000 52%,#a84646 100%)"></div>
<div class="abs" style="left:1px;top:140.5px;width:179px;height:8.5px;background:linear-gradient(90deg,#000 0,#000 52%,#8c8c8c 100%)"></div>
<div class="abs" style="left:86px;top:122px;width:9px;height:8.5px;border:1px solid #8e8e8e"></div>
<div class="abs" style="left:86px;top:131.3px;width:9px;height:8.5px;border:1px solid #8e8e8e"></div>
<div class="abs" style="left:86px;top:140.5px;width:9px;height:8.5px;border:1px solid #8e8e8e"></div>
<svg style="left:2px;top:153px" width="11" height="11" viewBox="0 0 11 11"><path d="M1.200 5a4.300 4.300 0 0 1 7.600-2.300M9.800 6a4.300 4.300 0 0 1-7.600 2.300" fill="none" stroke="#d8d8d8" stroke-width="1.300"/><path d="M9.500.5v2.800H6.700M1.500 10.500V7.700h2.800" fill="none" stroke="#d8d8d8" stroke-width="1.200"/></svg>
<div class="abs" style="left:0px;top:186px;width:197px;height:1px;background:#3b3b3b"></div>
<div class="abs" style="left:1px;top:166px;width:40px;height:21px;background:#4a4a4a;border:1px solid #3b3b3b;border-bottom:none;border-radius:3px 3px 0 0"></div>
<span class="abs t" style="left:11.5px;top:169.5px;line-height:16px;font-size:11.4px;letter-spacing:-0.89px">Pa...</span>
<div class="abs" style="left:42px;top:168px;width:40px;height:18px;background:#424242;border:1px solid #3b3b3b;border-bottom:none;border-radius:3px 3px 0 0"></div>
<span class="abs t" style="left:52.5px;top:169.5px;line-height:16px;font-size:11.4px;letter-spacing:-0.89px">Pa...</span>
<div class="abs" style="left:83px;top:168px;width:39px;height:18px;background:#424242;border:1px solid #3b3b3b;border-bottom:none;border-radius:3px 3px 0 0"></div>
<span class="abs t" style="left:93px;top:169.5px;line-height:16px;font-size:11.4px;letter-spacing:-1.01px">Co...</span>
<div class="abs" style="left:123px;top:168px;width:45px;height:18px;background:#424242;border:1px solid #3b3b3b;border-bottom:none;border-radius:3px 3px 0 0"></div>
<span class="abs t" style="left:136px;top:169.5px;line-height:16px;font-size:11.4px;letter-spacing:-0.89px">Sp...</span>
<div class="abs" style="left:170px;top:168px;width:11px;height:18px;background:#424242;border-radius:2px"></div>
<div class="abs" style="left:182px;top:168px;width:11px;height:18px;background:#4d4d4d;border-radius:2px"></div>
<svg style="left:173px;top:174px" width="4" height="7" viewBox="0 0 4 7"><path d="M4 0v7L0 3.500z" fill="#6a6a6a"/></svg>
<svg style="left:185px;top:173px" width="5" height="8" viewBox="0 0 5 8"><path d="M0 0v8l5-4z" fill="#b8b8b8"/></svg>
<svg style="left:0px;top:190px" width="181" height="113" viewBox="0 301 181 113"><defs><pattern id="pc" x="1.70" y="301.00" width="11.16" height="10.87" patternUnits="userSpaceOnUse"><rect width="11.16" height="10.87" fill="#898989"/><rect x="5.58" y="0" width="5.58" height="5.43" fill="#a5a5a5"/><rect x="0" y="5.43" width="5.58" height="5.43" fill="#a5a5a5"/><path d="M0 0V10.87M0 0H11.16" stroke="#6e6e6e" stroke-width="1.200"/></pattern></defs><rect x="1.7" y="301" width="178.600" height="113" fill="url(#pc)"/><rect x="2.30" y="301.60" width="10.56" height="10.27" fill="rgb(255,255,255)"/><rect x="13.46" y="301.60" width="10.56" height="10.27" fill="rgb(244,244,244)"/><rect x="24.62" y="301.60" width="10.56" height="10.27" fill="rgb(236,236,236)"/><rect x="35.78" y="301.60" width="10.56" height="10.27" fill="rgb(228,228,228)"/><rect x="46.94" y="301.60" width="10.56" height="10.27" fill="rgb(220,220,220)"/><rect x="58.10" y="301.60" width="10.56" height="10.27" fill="rgb(206,206,206)"/><rect x="69.26" y="301.60" width="10.56" height="10.27" fill="rgb(192,192,192)"/><rect x="80.42" y="301.60" width="10.56" height="10.27" fill="rgb(180,180,180)"/><rect x="91.58" y="301.60" width="10.56" height="10.27" fill="rgb(168,168,168)"/><rect x="102.74" y="301.60" width="10.56" height="10.27" fill="rgb(156,156,156)"/><rect x="113.90" y="301.60" width="10.56" height="10.27" fill="rgb(144,144,144)"/><rect x="125.06" y="301.60" width="10.56" height="10.27" fill="rgb(132,132,132)"/><rect x="136.22" y="301.60" width="10.56" height="10.27" fill="rgb(118,118,118)"/><rect x="147.38" y="301.60" width="10.56" height="10.27" fill="rgb(104,104,104)"/><rect x="158.54" y="301.60" width="10.56" height="10.27" fill="rgb(90,90,90)"/><rect x="169.70" y="301.60" width="10.56" height="10.27" fill="rgb(76,76,76)"/><rect x="2.30" y="312.47" width="10.56" height="10.27" fill="rgb(42,42,42)"/><rect x="13.46" y="312.47" width="10.56" height="10.27" fill="rgb(34,34,34)"/><rect x="24.62" y="312.47" width="10.56" height="10.27" fill="rgb(26,26,26)"/><rect x="35.78" y="312.47" width="10.56" height="10.27" fill="rgb(14,14,14)"/><rect x="46.94" y="312.47" width="10.56" height="10.27" fill="rgb(0,0,0)"/><rect x="2.30" y="323.34" width="10.56" height="10.27" fill="#84dcf2"/><rect x="13.46" y="323.34" width="10.56" height="10.27" fill="#0c9fc2"/></svg>
<div class="abs" style="left:182px;top:190px;width:10px;height:113px;background:#404040"></div>
<div class="abs" style="left:182px;top:202px;width:10px;height:46px;background:#4d4d4d;border-radius:2px"></div>
<svg style="left:184px;top:193px" width="7" height="4" viewBox="0 0 7 4"><path d="M0 4h7L3.500 0z" fill="#b0b0b0"/></svg>
<svg style="left:184px;top:295px" width="7" height="4" viewBox="0 0 7 4"><path d="M0 0h7L3.500 4z" fill="#b0b0b0"/></svg>
<div class="abs" style="left:2px;top:305px;width:190px;height:18px;background:#3d3d3d;border:1px solid #3a3a3a;border-radius:2px"></div>
<div class="abs" style="left:176px;top:305px;width:16px;height:18px;background:#464646;border-radius:2px"></div>
<div class="abs" style="left:5px;top:307px;width:13px;height:14px;background:#1e1e1e"></div>
<span class="abs t" style="left:19px;top:306.5px;line-height:16px;font-size:12.4px;letter-spacing:-0.83px;color:#e0e0e0">19 - 10 %</span>
<svg style="left:180px;top:313px" width="7" height="4" viewBox="0 0 7 4"><path d="M0 0h7L3.500 4z" fill="#9a9a9a"/></svg>
<span class="abs t" style="left:1px;top:324px;line-height:16px;font-size:11.4px;letter-spacing:-0.64px">GrayScale</span>
<svg style="left:4px;top:341px" width="14" height="14" viewBox="0 0 14 14"><rect width="14" height="14" fill="#e8e8e8"/><rect x="1.0" y="1.0" width="3.600" height="3.600" fill="#2468e0"/><rect x="5.2" y="1.0" width="3.600" height="3.600" fill="#10b0e0"/><rect x="9.4" y="1.0" width="3.600" height="3.600" fill="#28c848"/><rect x="1.0" y="5.2" width="3.600" height="3.600" fill="#e02828"/><rect x="5.2" y="5.2" width="3.600" height="3.600" fill="#e028d8"/><rect x="9.4" y="5.2" width="3.600" height="3.600" fill="#f0e020"/><rect x="1.0" y="9.4" width="3.600" height="3.600" fill="#f07818"/><rect x="5.2" y="9.4" width="3.600" height="3.600" fill="#28d028"/><rect x="9.4" y="9.4" width="3.600" height="3.600" fill="#c03030"/></svg>
<div class="abs" style="left:28px;top:339px;width:16px;height:17px;background:#404040;border-radius:2px"></div>
<div class="abs" style="left:49px;top:339px;width:16px;height:17px;background:#404040;border-radius:2px"></div>
<svg style="left:71px;top:341px" width="14" height="14" viewBox="0 0 14 14"><path d="M7 0v14M0 7h14" stroke="#e0e0e0" stroke-width="1.600"/></svg>
<svg style="left:92px;top:341px" width="13" height="13" viewBox="0 0 13 13"><path d="M1 12l1-3.500L9.500 1 12 3.500 4.500 11z" fill="none" stroke="#e0e0e0" stroke-width="1.300" stroke-linejoin="round"/></svg>
<svg style="left:113px;top:342px" width="13" height="13" viewBox="0 0 13 13"><path d="M.7.700h9.800l1.800 1.800v9.800H.7z" fill="none" stroke="#e0e0e0" stroke-width="1.300"/><path d="M3.200.7v3.600h5.600V.7M3 12.300V7.500h7v4.800" fill="none" stroke="#e0e0e0" stroke-width="1.200"/></svg>
<svg style="left:133px;top:341px" width="14" height="14" viewBox="0 0 14 14"><path d="M.7.700h12.600v12.600H.7zM5 .7v12.600M9 .7v12.600M.7 5h12.600M.7 9h12.600" fill="none" stroke="#e0e0e0" stroke-width="1.200"/></svg>
<svg style="left:155px;top:341px" width="12" height="14" viewBox="0 0 12 14"><path d="M0 2.500h12M4 2.500V.8h4v1.700" stroke="#e0e0e0" stroke-width="1.500" fill="none"/><path d="M1.300 4.500h9.400l-.7 9.500H2z" fill="#e0e0e0"/></svg>
<div class="abs" style="left:173px;top:339px;width:19px;height:17px;background:#434343;border:1px solid #3a3a3a;border-radius:2px"></div>
<span class="abs t" style="left:177px;top:339px;line-height:16px;font-size:11px;letter-spacing:0.28px;color:#c0c0c0">...</span>
<div class="abs" style="left:0px;top:380px;width:197px;height:1px;background:#3b3b3b"></div>
<div class="abs" style="left:2px;top:362px;width:53px;height:18px;background:#424242;border:1px solid #3b3b3b;border-bottom:none;border-radius:3px 3px 0 0"></div>
<span class="abs t" style="left:10.5px;top:363.5px;line-height:16px;font-size:11.4px;letter-spacing:-0.66px">Prese...</span>
<div class="abs" style="left:57px;top:360px;width:86px;height:21px;background:#4a4a4a;border:1px solid #3b3b3b;border-bottom:none;border-radius:3px 3px 0 0"></div>
<span class="abs t" style="left:66.9px;top:362px;line-height:16px;font-size:11.4px;letter-spacing:-0.51px">Brush Prese...</span>
<div class="abs" style="left:144px;top:362px;width:49px;height:18px;background:#424242;border:1px solid #3b3b3b;border-bottom:none;border-radius:3px 3px 0 0"></div>
<span class="abs t" style="left:154.6px;top:363.5px;line-height:16px;font-size:11.4px;letter-spacing:-0.62px">Und...</span>
<div class="abs" style="left:0px;top:382px;width:181px;height:264px;background:#393939"></div>
<div class="abs" style="left:0px;top:382px;width:181px;height:41.5px;background:#4b7ba6"></div>
<div class="abs" style="left:2.5px;top:382.5px;width:41px;height:41px;background:#bcc6d0"></div>
<span class="abs t" style="left:48.8px;top:394.8px;line-height:16px;font-size:11.4px;letter-spacing:-0.64px;color:#f0f4f8">Branches Random</span>
<div class="abs" style="left:2.5px;top:424.3px;width:41px;height:41px;background:#d9d9d9"></div>
<span class="abs t" style="left:48.8px;top:436.6px;line-height:16px;font-size:11.4px;letter-spacing:-0.37px;color:#dcdcdc">b) Basic-5 Size</span>
<div class="abs" style="left:2.5px;top:466.1px;width:41px;height:41px;background:#d9d9d9"></div>
<span class="abs t" style="left:48.8px;top:478.4px;line-height:16px;font-size:11.4px;letter-spacing:-0.53px;color:#dcdcdc">a) Eraser Small</span>
<div class="abs" style="left:2.5px;top:507.9px;width:41px;height:41px;background:#d9d9d9"></div>
<span class="abs t" style="left:48.8px;top:520.2px;line-height:16px;font-size:11.4px;letter-spacing:-0.38px;color:#dcdcdc">u) Pixel Art</span>
<div class="abs" style="left:2.5px;top:549.7px;width:41px;height:41px;background:#d9d9d9"></div>
<span class="abs t" style="left:48.8px;top:562px;line-height:16px;font-size:11.4px;letter-spacing:-0.25px;color:#dcdcdc">b) Airbrush Soft</span>
<div class="abs" style="left:2.5px;top:591.5px;width:41px;height:41px;background:#d9d9d9"></div>
<span class="abs t" style="left:48.8px;top:603.8px;line-height:16px;font-size:11.4px;letter-spacing:-0.48px;color:#dcdcdc">a) Eraser Soft</span>
<div class="abs" style="left:2.5px;top:633.3px;width:41px;height:13.2px;background:#d9d9d9"></div>
<svg style="left:2.5px;top:382.5px" width="41" height="41" viewBox="0 0 41 41"><defs><radialGradient id="br1"><stop offset="0" stop-color="#2c3440" stop-opacity=".95"/><stop offset=".6" stop-color="#3c4654" stop-opacity=".7"/><stop offset="1" stop-color="#5a6676" stop-opacity="0"/></radialGradient></defs><ellipse cx="13" cy="29" rx="10" ry="9" fill="url(#br1)"/><ellipse cx="27" cy="27" rx="10" ry="10" fill="url(#br1)"/><ellipse cx="20" cy="33" rx="12" ry="6" fill="url(#br1)"/><path d="M13 38l0-8M27 37l0-9M10 30l-4-5M16 28l3-6M24 27l-3-6M30 26l4-5M20 35l0-6" stroke="#2a323c" stroke-width=".7" opacity=".7"/><path d="M6 6l5 5M11 6l-5 5" stroke="#4a5560" stroke-width="1.100"/><rect x="28.500" y="2.500" width="10" height="10" rx="1.500" fill="#e8dcdc"/><circle cx="33.500" cy="7.500" r="4.200" fill="#d84848"/><circle cx="33.500" cy="7.500" r="1.800" fill="#f4eaea"/><path d="M30.500 4.500l6 6M36.500 4.500l-6 6" stroke="#f4eaea" stroke-width="1.300"/></svg>
<svg style="left:2.5px;top:424.3px" width="41" height="41" viewBox="0 0 41 41"><path d="M41 2L24 19" stroke="#a8a0a0" stroke-width="3.500"/><path d="M36 7L24 19" stroke="#5a2420" stroke-width="3.500"/><path d="M25 18l-5 5 3 1z" fill="#2a1a1a"/><path d="M14 24c-4 3-3 6 2 5s9-3 12-1-1 5 3 5 7-3 10-6" stroke="#141414" stroke-width="3.200" fill="none" stroke-linecap="round"/></svg>
<svg style="left:2.5px;top:466.1px" width="41" height="41" viewBox="0 0 41 41"><path d="M41 3L22 20" stroke="#2f62c8" stroke-width="7"/><path d="M38 2L20 18" stroke="#5a8ae8" stroke-width="2"/><path d="M21 19l-4 4" stroke="#e8eef8" stroke-width="7"/><path d="M10 27h2M14 30h2M18 32h2M22 32h2M26 30h2M30 28h2M12 31h2M16 34h2M20 35h2M24 34h2" stroke="#fff" stroke-width="2"/><path d="M12 27h2M16 30h2M20 32h2M24 32h2M28 30h2M14 31h2M18 34h2M22 35h2" stroke="#a8a8a8" stroke-width="2"/></svg>
<svg style="left:2.5px;top:507.9px" width="41" height="41" viewBox="0 0 41 41"><path d="M41 2L22 21" stroke="#2a5a94" stroke-width="5"/><path d="M39 1L21 19" stroke="#7aa8d8" stroke-width="1.300"/><path d="M22 21l-3 4 4-2z" fill="#1a2a3a"/><rect x="9" y="8" width="4" height="4" fill="#4a4a4a"/><path d="M14 25h3v3h3v3h3v3h9v-3h3v-3h3" stroke="#3a8ad0" stroke-width="2.600" fill="none" stroke-dasharray="2.600 1.300"/></svg>
<svg style="left:2.5px;top:549.7px" width="41" height="41" viewBox="0 0 41 41"><defs><radialGradient id="ab1"><stop offset="0" stop-color="#1c1c1c"/><stop offset=".55" stop-color="#2c2c2c" stop-opacity=".85"/><stop offset="1" stop-color="#555" stop-opacity="0"/></radialGradient><linearGradient id="ab2" x1="0" y1="0" x2="1" y2="1"><stop offset="0" stop-color="#f4f4f4"/><stop offset=".5" stop-color="#9a9a9a"/><stop offset="1" stop-color="#4a4a4a"/></linearGradient></defs><circle cx="6" cy="33" r="13" fill="url(#ab1)"/><path d="M41 3l-4-3-15 15 5 5z" fill="url(#ab2)"/><path d="M24 13l-5 8 8-4z" fill="#d8d8d8" stroke="#555" stroke-width=".6"/><circle cx="30" cy="20" r="1.800" fill="#2a2a2a"/><path d="M19 21l-2 3" stroke="#333" stroke-width="1.200"/></svg>
<svg style="left:2.5px;top:591.5px" width="41" height="41" viewBox="0 0 41 41"><path d="M12 24c0-8 8-14 16-16s12 2 11 8-6 10-14 12-13 1-13-4z" fill="#76838f"/><path d="M16 22c2-6 8-10 16-12" stroke="#9aa8b4" stroke-width="3" fill="none" opacity=".7"/><path d="M9 29h2M13 31h2M17 33h2M21 34h2M25 34h2M11 33h2M15 35h2M19 37h2M23 37h2" stroke="#fff" stroke-width="1.800"/><path d="M11 29h2M15 31h2M19 33h2M23 34h2M13 33h2M17 35h2M21 37h2" stroke="#b8b8b8" stroke-width="1.800"/></svg>
<svg style="left:2.5px;top:633.3px" width="41" height="12.7" viewBox="0 0 41 12.7"><path d="M41 0L26 13" stroke="#2a2a2a" stroke-width="3.500"/><path d="M41 4L30 13" stroke="#8a8a8a" stroke-width="1.200"/></svg>

<div class="abs" style="left:182px;top:382px;width:10px;height:264px;background:#404040"></div>
<div class="abs" style="left:182px;top:392px;width:10px;height:77px;background:#4d4d4d;border-radius:2px"></div>
<svg style="left:184px;top:385px" width="7" height="4" viewBox="0 0 7 4"><path d="M0 4h7L3.500 0z" fill="#b0b0b0"/></svg>
<svg style="left:184px;top:638px" width="7" height="4" viewBox="0 0 7 4"><path d="M0 0h7L3.500 4z" fill="#b0b0b0"/></svg>

</div>

<!-- ============ canvas area ============ -->
<div id="canvasarea" class="abs">
<svg style="left:0;top:0" width="836" height="651" viewBox="197 111 836 651">
<defs>
<pattern id="chk" x="278.9" y="298.3" width="53.46" height="53.46" patternUnits="userSpaceOnUse">
<rect width="53.46" height="53.46" fill="#fff"/>
<rect x="0" y="0" width="26.73" height="26.73" fill="#dcdcdc"/>
<rect x="26.73" y="26.73" width="26.73" height="26.73" fill="#dcdcdc"/>
</pattern>
</defs>
<rect x="268.8" y="281.4" width="418.2" height="418" fill="url(#chk)"/>
<g id="bat">
<path d="M304.6 308.6C304.8 308.3 305.2 307.2 306.0 306.9C306.8 306.6 308.1 306.1 309.6 306.6C311.1 307.1 312.9 308.2 315.0 310.0C317.1 311.8 318.3 312.8 321.9 317.3C325.5 321.8 332.1 330.1 336.8 337.1C341.6 344.1 346.3 352.4 350.4 359.4C354.5 366.4 358.2 372.2 361.5 379.2C364.8 386.2 367.9 394.0 370.2 401.4C372.5 408.8 373.5 415.8 375.1 423.7C376.8 431.6 377.8 441.5 380.1 448.5C382.4 455.5 384.9 460.4 388.8 465.8C392.7 471.2 399.4 477.2 403.6 480.6C407.8 484.1 412.3 485.5 414.0 486.5C414.8 485.9 417.9 484.4 419.0 483.0C420.1 481.6 419.8 479.4 420.5 478.0C421.2 476.6 422.3 475.4 423.4 474.5C424.5 473.6 425.8 472.7 427.1 472.7C428.4 472.7 429.9 473.4 431.0 474.5C432.1 475.6 432.7 477.3 433.5 479.0C434.3 480.7 434.8 483.0 436.0 484.5C437.2 486.0 439.2 487.3 441.0 488.0C442.8 488.7 445.0 488.8 447.0 488.5C449.0 488.2 451.1 486.8 453.0 486.5C454.9 486.2 457.0 486.1 458.6 486.5C460.2 486.9 461.7 487.9 462.5 489.0C463.3 490.1 463.7 491.3 463.3 493.0C462.9 494.7 461.4 497.1 460.0 499.0C458.6 500.9 456.2 502.9 455.0 504.5C453.8 506.1 452.8 507.3 452.8 508.5C452.8 509.7 453.8 510.7 455.0 511.5C456.2 512.3 459.2 513.2 460.0 513.5C461.3 514.0 464.9 515.7 468.0 516.5C471.1 517.3 474.7 518.0 478.4 518.2C482.1 518.5 486.7 518.2 490.0 518.0C493.3 517.8 494.9 517.5 498.2 516.7C501.5 515.9 506.2 514.8 509.8 513.0C513.4 511.2 517.1 508.3 520.0 506.0C522.9 503.7 522.6 502.8 527.1 499.4C531.6 496.0 539.5 489.9 546.9 485.8C554.3 481.7 563.5 477.4 571.7 474.7C580.0 472.0 587.7 470.8 596.4 469.7C605.1 468.6 614.6 467.8 623.7 468.0C632.8 468.2 643.1 469.8 650.9 471.0C658.7 472.2 666.0 474.2 670.7 475.4C675.5 476.6 677.5 477.4 679.4 478.4C681.3 479.4 681.7 480.4 682.0 481.5C682.3 482.6 681.2 484.2 681.1 484.8C680.8 484.3 680.1 482.5 679.0 481.8C677.9 481.1 677.4 480.3 674.4 480.8C671.4 481.3 665.5 481.9 660.8 484.6C656.0 487.3 650.2 491.9 645.9 496.9C641.6 501.8 637.5 508.5 634.8 514.3C632.1 520.1 630.6 527.3 629.9 531.6C629.2 535.9 630.0 537.5 630.5 540.0C631.0 542.5 632.7 545.5 633.1 546.6C632.6 545.8 631.0 542.9 630.0 541.8C629.0 540.7 630.1 540.1 627.4 540.2C624.7 540.4 619.0 540.4 613.8 542.7C608.6 545.0 601.3 549.6 596.4 553.9C591.5 558.2 587.4 563.8 584.1 568.7C580.8 573.7 578.2 579.4 576.6 583.6C575.0 587.8 574.6 592.0 574.2 593.7C573.8 592.8 572.8 589.5 572.0 588.0C571.2 586.5 572.1 586.8 569.2 584.8C566.3 582.8 560.2 578.6 554.4 576.1C548.6 573.6 541.2 571.4 534.6 570.0C528.0 568.6 521.7 567.5 514.8 567.5C507.9 567.5 500.2 568.6 493.3 570.0C486.4 571.4 479.3 573.4 473.5 576.1C467.7 578.8 463.2 582.7 458.6 586.0C454.1 589.3 449.1 592.6 446.2 595.9C443.3 599.2 442.1 604.3 441.3 606.0C441.6 604.3 443.0 600.0 443.0 595.9C443.0 591.8 442.6 585.4 441.3 581.1C440.0 576.8 437.6 572.3 435.1 570.0C432.6 567.7 429.5 567.3 426.4 567.5C423.3 567.7 418.7 569.5 416.5 571.2C414.3 573.0 413.8 575.9 413.0 578.0C412.2 580.1 411.8 582.7 411.6 583.6C411.1 582.7 409.7 579.0 408.5 578.0C407.3 577.0 405.9 577.2 404.5 577.5C403.1 577.8 401.1 579.6 400.4 580.0C400.8 579.0 402.6 575.9 403.0 574.0C403.4 572.1 403.9 570.0 402.9 568.7C401.8 567.4 398.5 566.0 396.7 566.2C394.9 566.4 393.0 568.5 392.0 570.0C391.0 571.5 390.8 574.2 390.5 575.0C390.1 574.1 388.9 570.9 388.0 569.8C387.1 568.7 386.0 568.4 385.0 568.5C384.0 568.6 382.4 569.9 381.9 570.2C382.5 569.3 384.5 566.9 385.5 565.0C386.5 563.1 388.7 561.9 388.1 558.8C387.5 555.7 385.0 549.3 381.9 546.4C378.8 543.5 374.0 541.5 369.5 541.5C365.0 541.5 358.4 544.7 354.7 546.4C351.0 548.1 349.3 549.8 347.5 551.5C345.7 553.2 344.6 555.7 344.0 556.5C344.2 555.5 344.2 552.2 345.0 550.5C345.8 548.8 347.5 547.9 348.5 546.0C349.5 544.1 351.1 544.3 350.9 539.0C350.7 533.7 349.1 521.6 347.2 514.3C345.3 507.0 341.9 500.2 339.3 495.0C336.7 489.8 335.1 487.6 331.8 483.1C328.5 478.7 324.0 472.6 319.5 468.3C315.0 464.0 310.0 460.2 304.6 457.1C299.2 454.0 291.5 451.1 287.3 449.7C283.1 448.3 281.4 448.5 279.5 448.6C277.6 448.7 276.6 449.6 275.8 450.3C275.0 451.0 275.0 452.6 274.8 453.0C275.1 452.4 275.8 450.8 276.8 449.6C277.9 448.4 278.9 448.2 281.1 446.0C283.3 443.8 287.3 440.6 289.8 436.1C292.3 431.6 294.9 425.0 295.9 418.8C296.9 412.6 296.9 405.2 295.9 399.0C294.9 392.8 291.7 385.4 289.8 381.6C287.9 377.8 286.1 377.4 284.5 376.2C282.9 375.0 281.3 374.4 280.2 374.4C279.1 374.4 278.5 376.1 278.1 376.4C278.4 375.9 278.7 373.8 279.6 373.3C280.5 372.8 280.7 374.3 283.6 373.2C286.5 372.1 293.1 370.4 297.2 366.8C301.3 363.2 305.6 357.3 308.3 351.9C311.0 346.5 312.5 340.0 313.3 334.6C314.1 329.2 313.8 323.7 313.3 319.8C312.8 315.9 311.6 313.4 310.5 311.5C309.4 309.6 308.0 309.1 307.0 308.6C306.0 308.1 305.0 308.6 304.6 308.6Z" fill="#000"/>
<circle cx="428.9" cy="497" r="1.4" fill="#fff"/><circle cx="440" cy="502" r="1.4" fill="#fff"/>
<path d="M426.5 509.5v-2.3q0-1.6 1.6-1.6h3.2q1.6 0 1.6 1.6v3.2" fill="none" stroke="#fff" stroke-width="1.5"/>

</g>
</svg>
<div class="abs" style="left:0px;top:0px;width:2px;height:651px;background:#4a4a4a"></div>
<div class="abs" style="left:5.5px;top:3.5px;width:43px;height:11px;background:#6b6b6b;border-radius:4px;border:1px dashed #747474"></div>
<svg style="left:24.5px;top:6px" width="4" height="6" viewBox="0 0 4 6"><path d="M4 0v6L0 3z" fill="#a8a8a8"/></svg>
<div class="abs" style="left:5.5px;top:21px;width:21.3px;height:21.3px;background:#4e4e4e;border-radius:4px"></div>
<svg style="left:8.15px;top:23.65px" width="16" height="16" viewBox="0 0 16 16"><path d="M4.500 1.500v12l3-2.800 2 4.300 1.800-.8-2-4.200 4-.3z" fill="#ececec"/></svg>
<div class="abs" style="left:27.2px;top:21px;width:21.3px;height:21.3px;background:#4e4e4e;border-radius:4px"></div>
<svg style="left:29.85px;top:23.65px" width="16" height="16" viewBox="0 0 16 16"><text x="8" y="14" font-family="Liberation Serif,serif" font-size="17" text-anchor="middle" fill="#ececec">T</text></svg>
<div class="abs" style="left:5.5px;top:42.5px;width:21.3px;height:21.3px;background:#4e4e4e;border-radius:4px"></div>
<svg style="left:8.15px;top:45.15px" width="16" height="16" viewBox="0 0 16 16"><path d="M3 13V5.500Q3 3 6 3h5" stroke="#ececec" fill="none" stroke-width="1.200"/><rect x="1.500" y="12" width="3" height="3" stroke="#ececec" fill="none"/><rect x="10.500" y="1.500" width="3" height="3" stroke="#ececec" fill="none"/><path d="M8 7.500v7l1.800-1.600 1.200 2.500 1.200-.6-1.200-2.400 2.500-.2z" fill="#ececec"/></svg>
<div class="abs" style="left:27.2px;top:42.5px;width:21.3px;height:21.3px;background:#4e4e4e;border-radius:4px"></div>
<svg style="left:29.85px;top:45.15px" width="16" height="16" viewBox="0 0 16 16"><path d="M9.500 1l5.500 5.500-3 1-6.500 6.500-4.500 1 1-4.500L8.500 4z" fill="#ececec"/><path d="M2 14l5-5" stroke="#4d4d4d" stroke-width="1"/><circle cx="7.800" cy="8.200" r="1.100" fill="#4d4d4d"/></svg>
<div class="abs" style="left:5.5px;top:69.5px;width:21.3px;height:21.3px;background:#4e4e4e;border-radius:4px"></div>
<svg style="left:8.15px;top:72.15px" width="16" height="16" viewBox="0 0 16 16"><path d="M14.500 1.500L8 8.500" stroke="#ececec" stroke-width="2.200" stroke-linecap="round"/><path d="M7.500 8l1.800 1.800C8 12.500 6 14.500 1.500 14.500 4 12.500 4.500 10 7.500 8z" fill="#ececec"/></svg>
<div class="abs" style="left:27.2px;top:69.5px;width:21.3px;height:21.3px;background:#4e4e4e;border-radius:4px"></div>
<svg style="left:29.85px;top:72.15px" width="16" height="16" viewBox="0 0 16 16"><path d="M2 14L14 2" stroke="#ececec" stroke-width="1.500"/></svg>
<div class="abs" style="left:5.5px;top:91px;width:21.3px;height:21.3px;background:#4e4e4e;border-radius:4px"></div>
<svg style="left:8.15px;top:93.65px" width="16" height="16" viewBox="0 0 16 16"><rect x="2" y="2" width="12" height="12" stroke="#ececec" fill="none" stroke-width="1.500"/></svg>
<div class="abs" style="left:27.2px;top:91px;width:21.3px;height:21.3px;background:#4e4e4e;border-radius:4px"></div>
<svg style="left:29.85px;top:93.65px" width="16" height="16" viewBox="0 0 16 16"><circle cx="8" cy="8" r="6.300" stroke="#ececec" fill="none" stroke-width="1.500"/></svg>
<div class="abs" style="left:5.5px;top:112.5px;width:21.3px;height:21.3px;background:#4e4e4e;border-radius:4px"></div>
<svg style="left:8.15px;top:115.15px" width="16" height="16" viewBox="0 0 16 16"><path d="M5.500 2.500H14v6.500l-5 5H2V6z" stroke="#ececec" fill="none" stroke-width="1.500" stroke-linejoin="round"/></svg>
<div class="abs" style="left:27.2px;top:112.5px;width:21.3px;height:21.3px;background:#4e4e4e;border-radius:4px"></div>
<svg style="left:29.85px;top:115.15px" width="16" height="16" viewBox="0 0 16 16"><path d="M13 13.500L2.500 2l12 5-11.500 4.500" stroke="#ececec" fill="none" stroke-width="1.500" stroke-linejoin="round"/></svg>
<div class="abs" style="left:5.5px;top:134px;width:21.3px;height:21.3px;background:#4e4e4e;border-radius:4px"></div>
<svg style="left:8.15px;top:136.65px" width="16" height="16" viewBox="0 0 16 16"><path d="M2 14.500C3 7 5.500 4.500 8 4.500s5 2.500 6 10" stroke="#ececec" fill="none" stroke-width="1.400"/><path d="M2.500 3.500h11" stroke="#ececec" stroke-width="1"/><rect x="6.800" y="2.300" width="2.400" height="2.400" fill="#ececec"/><circle cx="2.500" cy="3.500" r="1.300" fill="#ececec"/><circle cx="13.500" cy="3.500" r="1.300" fill="#ececec"/></svg>
<div class="abs" style="left:27.2px;top:134px;width:21.3px;height:21.3px;background:#4e4e4e;border-radius:4px"></div>
<svg style="left:29.85px;top:136.65px" width="16" height="16" viewBox="0 0 16 16"><path d="M2 6.500C4 2 9 1.500 11 4.500c1 1.800 0 4 0 6" stroke="#ececec" fill="none" stroke-width="1.400"/><rect x="9.500" y="10.500" width="3" height="3" stroke="#ececec" fill="none"/><path d="M11 14v1.500" stroke="#ececec"/><circle cx="2.200" cy="6.500" r="1.300" fill="#ececec"/></svg>
<div class="abs" style="left:5.5px;top:155.5px;width:21.3px;height:21.3px;background:#4e4e4e;border-radius:4px"></div>
<svg style="left:8.15px;top:158.15px" width="16" height="16" viewBox="0 0 16 16"><path d="M3 2.500c6 0 10.500 1.500 10.500 4.500S9 12.500 2 14.500" stroke="#ececec" fill="none" stroke-width="1.600" stroke-linecap="round"/><circle cx="6.500" cy="7.500" r="1" fill="#ececec"/></svg>
<div class="abs" style="left:27.2px;top:155.5px;width:21.3px;height:21.3px;background:#4e4e4e;border-radius:4px"></div>
<svg style="left:29.85px;top:158.15px" width="16" height="16" viewBox="0 0 16 16"><path d="M14.500 1.500l-2 5.500-3.500-3.500z" fill="#ececec"/><path d="M11 5L3 13M9 3.500L2 7M12.500 7L9 14.500" stroke="#ececec" stroke-width="1.600" stroke-linecap="round"/></svg>
<div class="abs" style="left:5.5px;top:183px;width:21.3px;height:21.3px;background:#4b7ba6;border-radius:4px"></div>
<svg style="left:8.15px;top:185.65px" width="16" height="16" viewBox="0 0 16 16"><rect x="3" y="3" width="10" height="10" stroke="#ececec" fill="none" stroke-width="1.400"/><rect x="1" y="1" width="3.400" height="3.400" fill="#ececec"/><rect x="11.600" y="1" width="3.400" height="3.400" fill="#ececec"/><rect x="1" y="11.600" width="3.400" height="3.400" fill="#ececec"/><rect x="11.600" y="11.600" width="3.400" height="3.400" fill="#ececec"/><circle cx="8" cy="8" r="1" fill="#ececec"/></svg>
<div class="abs" style="left:27.2px;top:183px;width:21.3px;height:21.3px;background:#4e4e4e;border-radius:4px"></div>
<svg style="left:29.85px;top:185.65px" width="16" height="16" viewBox="0 0 16 16"><path d="M8 1.500v13M1.500 8h13" stroke="#ececec" stroke-width="1.500"/><path d="M8 0l2.600 3.200H5.400zM8 16l2.600-3.200H5.400zM0 8l3.200-2.600v5.200zM16 8l-3.200-2.600v5.200z" fill="#ececec"/></svg>
<div class="abs" style="left:5.5px;top:204.5px;width:21.3px;height:21.3px;background:#4e4e4e;border-radius:4px"></div>
<svg style="left:8.15px;top:207.15px" width="16" height="16" viewBox="0 0 16 16"><path d="M4.500 1v10.500H15M1 4.500h10.500V15" stroke="#ececec" fill="none" stroke-width="1.900"/></svg>
<div class="abs" style="left:5.5px;top:231px;width:21.3px;height:21.3px;background:#4e4e4e;border-radius:4px"></div>
<svg style="left:8.15px;top:233.65px" width="16" height="16" viewBox="0 0 16 16"><defs><linearGradient id="tgr" x1="0" x2="1"><stop offset="0" stop-color="#f4f4f4"/><stop offset="1" stop-color="#555"/></linearGradient></defs><rect x="1.500" y="2" width="13" height="12" fill="url(#tgr)" stroke="#ececec" stroke-width="1.200"/></svg>
<div class="abs" style="left:27.2px;top:231px;width:21.3px;height:21.3px;background:#4e4e4e;border-radius:4px"></div>
<svg style="left:29.85px;top:233.65px" width="16" height="16" viewBox="0 0 16 16"><path d="M10 3l3 3" stroke="#ececec" stroke-width="3.200" stroke-linecap="round"/><path d="M12.500 1.500l2 2" stroke="#ececec" stroke-width="3" stroke-linecap="round"/><path d="M9.500 6.500L3 13l-1.500 1.500" stroke="#ececec" stroke-width="1.800" stroke-linecap="round"/></svg>
<div class="abs" style="left:5.5px;top:252.5px;width:21.3px;height:21.3px;background:#4e4e4e;border-radius:4px"></div>
<svg style="left:8.15px;top:255.15px" width="16" height="16" viewBox="0 0 16 16"><path d="M3 13L13 3" stroke="#ececec" stroke-width="1.600" stroke-dasharray="2.500 1.500"/><circle cx="8" cy="8" r="2.600" fill="#ececec"/><path d="M8 1v2.200M8 12.800V15M1 8h2.200M12.800 8H15M3 3l1.500 1.500M13 13l-1.500-1.500" stroke="#ececec" stroke-width="1.100"/></svg>
<div class="abs" style="left:27.2px;top:252.5px;width:21.3px;height:21.3px;background:#4e4e4e;border-radius:4px"></div>
<svg style="left:29.85px;top:255.15px" width="16" height="16" viewBox="0 0 16 16"><path d="M3.500 9.500l6-6 3 3-6 6z" fill="#ececec"/><path d="M3.500 3.500l9 9" stroke="#ececec" stroke-width="3.300" stroke-linecap="round"/><path d="M6.500 8h.1M8 6.500h.1M8 9.500h.1M9.500 8h.1" stroke="#4d4d4d" stroke-width="1" stroke-linecap="round"/></svg>
<div class="abs" style="left:5.5px;top:274px;width:21.3px;height:21.3px;background:#4e4e4e;border-radius:4px"></div>
<svg style="left:8.15px;top:276.65px" width="16" height="16" viewBox="0 0 16 16"><path d="M7 2.500l6.500 6.500-5 5L2 7.500z" fill="#ececec"/><path d="M4 1l4.500 4.500" stroke="#ececec" stroke-width="1.300"/><path d="M14.200 10.500c1.200 2 1.200 3.500 0 3.500s-1.200-1.500 0-3.500z" fill="#ececec"/></svg>
<div class="abs" style="left:27.2px;top:274px;width:21.3px;height:21.3px;background:#4e4e4e;border-radius:4px"></div>
<svg style="left:29.85px;top:276.65px" width="16" height="16" viewBox="0 0 16 16"><circle cx="8" cy="8" r="6.500" stroke="#ececec" fill="none" stroke-width="1.300" stroke-dasharray="2.600 1.700"/><circle cx="8" cy="8" r="3.300" stroke="#ececec" fill="none" stroke-width="1.200"/><path d="M6 8.500h4" stroke="#ececec" stroke-width="1.500"/></svg>
<div class="abs" style="left:5.5px;top:301px;width:21.3px;height:21.3px;background:#4e4e4e;border-radius:4px"></div>
<svg style="left:8.15px;top:303.65px" width="16" height="16" viewBox="0 0 16 16"><path d="M2.500 2.500l11 11M13.500 2.500l-11 11" stroke="#ececec" stroke-width="1.200"/><rect x="4" y="4" width="8" height="8" stroke="#ececec" fill="none" stroke-width="1.200"/><circle cx="2.500" cy="2.500" r="1.400" fill="#ececec"/><circle cx="13.500" cy="2.500" r="1.400" fill="#ececec"/><circle cx="2.500" cy="13.500" r="1.400" fill="#ececec"/><circle cx="13.500" cy="13.500" r="1.400" fill="#ececec"/></svg>
<div class="abs" style="left:27.2px;top:301px;width:21.3px;height:21.3px;background:#4e4e4e;border-radius:4px"></div>
<svg style="left:29.85px;top:303.65px" width="16" height="16" viewBox="0 0 16 16"><path d="M2 14L11.500 2.500M2 14h12.500" stroke="#ececec" fill="none" stroke-width="1.500"/><path d="M7.500 14a5.500 5.500 0 0 0-2-4.300" stroke="#ececec" fill="none" stroke-width="1.200"/></svg>
<div class="abs" style="left:5.5px;top:322.5px;width:21.3px;height:21.3px;background:#4e4e4e;border-radius:4px"></div>
<svg style="left:8.15px;top:325.15px" width="16" height="16" viewBox="0 0 16 16"><path d="M9.500 1.500l5 5-1.500.8-2.500-.3-2 2 .3 3-1.300 1L2.500 8l1-1.300 3 .3 2-2L8.200 2.500z" fill="#ececec"/><path d="M5.500 10.500L1.500 14.500" stroke="#ececec" stroke-width="1.400" stroke-linecap="round"/></svg>
<div class="abs" style="left:5.5px;top:350px;width:21.3px;height:21.3px;background:#4e4e4e;border-radius:4px"></div>
<svg style="left:8.15px;top:352.65px" width="16" height="16" viewBox="0 0 16 16"><rect x="2" y="2" width="12" height="12" stroke="#ececec" fill="none" stroke-width="1.500" stroke-dasharray="2.800 1.800"/></svg>
<div class="abs" style="left:27.2px;top:350px;width:21.3px;height:21.3px;background:#4e4e4e;border-radius:4px"></div>
<svg style="left:29.85px;top:352.65px" width="16" height="16" viewBox="0 0 16 16"><circle cx="8" cy="8" r="6.300" stroke="#ececec" fill="none" stroke-width="1.500" stroke-dasharray="2.800 1.800"/></svg>
<div class="abs" style="left:5.5px;top:371.5px;width:21.3px;height:21.3px;background:#4e4e4e;border-radius:4px"></div>
<svg style="left:8.15px;top:374.15px" width="16" height="16" viewBox="0 0 16 16"><path d="M5.500 2.500H14v6.500l-5 5H2V6z" stroke="#ececec" fill="none" stroke-width="1.500" stroke-dasharray="2.800 1.800"/></svg>
<div class="abs" style="left:27.2px;top:371.5px;width:21.3px;height:21.3px;background:#4e4e4e;border-radius:4px"></div>
<svg style="left:29.85px;top:374.15px" width="16" height="16" viewBox="0 0 16 16"><path d="M8 8c-2-3 1-6 4-5s3.500 5 1 8-7 3.500-9 1-1-6 1-7" stroke="#ececec" fill="none" stroke-width="1.500" stroke-dasharray="2.800 1.800"/></svg>
<div class="abs" style="left:5.5px;top:393px;width:21.3px;height:21.3px;background:#4e4e4e;border-radius:4px"></div>
<svg style="left:8.15px;top:395.65px" width="16" height="16" viewBox="0 0 16 16"><path d="M7 7l7.500 7.500" stroke="#ececec" stroke-width="2" stroke-linecap="round"/><path d="M6 1v3.500M6 8.500V12M.5 6.500H4M8 6.500h3.500M2 2.500l2.300 2.300M10 2.500L7.700 4.800M2 10.500l2.300-2.300" stroke="#ececec" stroke-width="1.200"/></svg>
<div class="abs" style="left:27.2px;top:393px;width:21.3px;height:21.3px;background:#4e4e4e;border-radius:4px"></div>
<svg style="left:29.85px;top:395.65px" width="16" height="16" viewBox="0 0 16 16"><rect x="1.500" y="3.500" width="11" height="11" stroke="#ececec" fill="none" stroke-width="1.400" stroke-dasharray="2.800 1.800"/><path d="M11 3l2.500 2.500" stroke="#ececec" stroke-width="2.800" stroke-linecap="round"/><path d="M10 6.500L5.500 11 4.500 12" stroke="#ececec" stroke-width="1.600" stroke-linecap="round"/></svg>
<div class="abs" style="left:5.5px;top:414.5px;width:21.3px;height:21.3px;background:#4e4e4e;border-radius:4px"></div>
<svg style="left:8.15px;top:417.15px" width="16" height="16" viewBox="0 0 16 16"><rect x="2.500" y="4" width="11" height="10" rx="2" stroke="#ececec" fill="none" stroke-width="1.400" stroke-dasharray="2.800 1.800"/><path d="M3 2.500h10" stroke="#ececec" stroke-width="1"/><circle cx="3" cy="2.500" r="1.300" fill="#ececec"/><circle cx="13" cy="2.500" r="1.300" fill="#ececec"/><rect x="6.800" y="1.300" width="2.400" height="2.400" fill="#ececec"/></svg>
<div class="abs" style="left:27.2px;top:414.5px;width:21.3px;height:21.3px;background:#4e4e4e;border-radius:4px"></div>
<svg style="left:29.85px;top:417.15px" width="16" height="16" viewBox="0 0 16 16"><rect x="1.500" y="2" width="13" height="12" stroke="#ececec" fill="none" stroke-width="1.400" stroke-dasharray="2.800 1.800"/><path d="M6 12V8.500a2.500 2.500 0 0 1 5 0" stroke="#ececec" fill="none" stroke-width="1.800"/></svg>
<div class="abs" style="left:5.5px;top:441px;width:21.3px;height:21.3px;background:#4e4e4e;border-radius:4px"></div>
<svg style="left:8.15px;top:443.65px" width="16" height="16" viewBox="0 0 16 16"><circle cx="6.500" cy="6.500" r="4.300" stroke="#ececec" fill="none" stroke-width="1.700"/><path d="M9.800 9.800l4.700 4.700" stroke="#ececec" stroke-width="2.200" stroke-linecap="round"/></svg>
<div class="abs" style="left:27.2px;top:441px;width:21.3px;height:21.3px;background:#4e4e4e;border-radius:4px"></div>
<svg style="left:29.85px;top:443.65px" width="16" height="16" viewBox="0 0 16 16"><path d="M4 9V4a1 1 0 0 1 2 0v3.500V2.500a1 1 0 0 1 2 0v5V3a1 1 0 0 1 2 0v4.500V4.500a1 1 0 0 1 2 0V10c0 3-1.500 5-4.500 5S3.500 13.500 2 10.500c-.6-1.200.8-2 2-.5z" fill="#ececec"/></svg>
<div class="abs" style="left:829.5px;top:0px;width:3px;height:651px;background:#8a8a8a"></div>
<div class="abs" style="left:832.5px;top:0px;width:3.5px;height:651px;background:#474747"></div>
<div class="abs" style="left:575px;top:3.8px;width:253.5px;height:10.8px;background:#515151;border-radius:4px"></div>
<svg style="left:700px;top:6.2px" width="4" height="6" viewBox="0 0 4 6"><path d="M0 0v6l4-3z" fill="#9a9a9a"/></svg>
<div class="abs" style="left:575px;top:20px;width:254.2px;height:389.5px;background:#484848"></div>
<span class="abs t" style="left:586.4px;top:33.5px;line-height:16px;font-size:11.4px;letter-spacing:-0.7px">Preview</span>
<div class="abs" style="left:629.8px;top:32.2px;width:187.6px;height:17.6px;background:#434343;border:1px solid #3a3a3a;border-radius:2px"></div>
<span class="abs t" style="left:633px;top:33.3px;line-height:16px;font-size:12px;letter-spacing:-0.36px">Accurate with Instant Preview</span>
<svg style="left:804.5px;top:39.5px" width="7" height="4" viewBox="0 0 7 4"><path d="M0 0h7L3.500 4z" fill="#9a9a9a"/></svg>
<div class="abs" style="left:588.5px;top:57.5px;width:16px;height:17.5px;background:#3c3c3c;border-radius:2px"></div>
<svg style="left:590.5px;top:60px" width="12" height="12" viewBox="0 0 12 12"><rect x=".8" y=".8" width="10.400" height="10.400" stroke="#ececec" fill="none" stroke-width="1.400"/></svg>
<svg style="left:609.5px;top:60px" width="13" height="12" viewBox="0 0 13 12"><path d="M1 .8v10.400L8.500 6z" stroke="#ececec" fill="none" stroke-width="1.300"/><path d="M10.500 6h1.500" stroke="#ececec" stroke-width="1.300"/></svg>
<svg style="left:629.5px;top:59.5px" width="13" height="13" viewBox="0 0 13 13"><path d="M1 2.500Q6.500 0 12 2.500V10.500Q6.500 13 1 10.500zM6.500 1.200v10.800M1 6.500Q6.500 5 12 6.500" stroke="#ececec" fill="none" stroke-width="1.200"/></svg>
<svg style="left:650.5px;top:60px" width="12" height="12" viewBox="0 0 12 12"><path d="M2 1h8.500l-1 5.500H5.500L4 11 1 10z" stroke="#ececec" fill="none" stroke-width="1.300" stroke-linejoin="round"/></svg>
<svg style="left:672px;top:59.5px" width="9" height="13" viewBox="0 0 9 13"><path d="M4.500.5C7.500 5 8.500 7 8.500 8.800a4 4 0 0 1-8 0C.5 7 1.500 5 4.500.5z" fill="#ececec"/><circle cx="4.500" cy="9" r="1.500" fill="#484848"/></svg>
<svg style="left:690.5px;top:60px" width="13" height="13" viewBox="0 0 13 13"><rect x="1.500" y="1.500" width="10" height="10" stroke="#ececec" fill="none" stroke-width="1" stroke-dasharray="1.500 1"/><rect width="2.600" height="2.600" fill="#ececec"/><rect x="10.400" width="2.600" height="2.600" fill="#ececec"/><rect y="10.400" width="2.600" height="2.600" fill="#ececec"/><rect x="10.400" y="10.400" width="2.600" height="2.600" fill="#ececec"/></svg>
<span class="abs t" style="left:797.3px;top:59px;line-height:16px;font-size:11.4px;letter-spacing:-0.73px">Free</span>
<div class="abs" style="left:586.5px;top:85.4px;width:232px;height:248.6px;border:1px solid #404040;border-radius:2px"></div>
<span class="abs t" style="left:594.6px;top:97.8px;line-height:16px;font-size:11.4px;letter-spacing:-0.41px;text-decoration:none">Filter:</span>
<div class="abs" style="left:594.6px;top:112.3px;width:6px;height:0.8px;background:#cfcfcf"></div>
<div class="abs" style="left:629.8px;top:96.4px;width:111.2px;height:18.2px;background:#434343;border:1px solid #3a3a3a;border-radius:2px"></div>
<span class="abs t" style="left:633.5px;top:97.6px;line-height:16px;font-size:12px;letter-spacing:-0.03px">Bicubic</span>
<svg style="left:728.5px;top:104px" width="7" height="4" viewBox="0 0 7 4"><path d="M0 0h7L3.500 4z" fill="#9a9a9a"/></svg>
<div class="abs" style="left:750.6px;top:97.2px;width:11px;height:11px;background:#3a3a3a;border-radius:50%"></div>
<div class="abs" style="left:753.1px;top:99.7px;width:6px;height:6px;background:#b4b4b4;border-radius:50%"></div>
<span class="abs t" style="left:767px;top:95px;line-height:16px;font-size:11.4px;letter-spacing:-0.43px">Position</span>
<div class="abs" style="left:750.6px;top:123.05px;width:11px;height:11px;background:#3a3a3a;border-radius:50%"></div>
<span class="abs t" style="left:767px;top:120.85px;line-height:16px;font-size:11.4px;letter-spacing:-0.51px">Rotate</span>
<div class="abs" style="left:750.6px;top:148.9px;width:11px;height:11px;background:#3a3a3a;border-radius:50%"></div>
<span class="abs t" style="left:767px;top:146.7px;line-height:16px;font-size:11.4px;letter-spacing:-0.6px">Scale</span>
<div class="abs" style="left:750.6px;top:174.75px;width:11px;height:11px;background:#3a3a3a;border-radius:50%"></div>
<span class="abs t" style="left:767px;top:172.55px;line-height:16px;font-size:11.4px;letter-spacing:-0.68px">Shear</span>
<div class="abs" style="left:657.3px;top:130.2px;width:18.3px;height:17.8px;background:#3d3d3d;border-radius:2px"></div>
<svg style="left:657.9px;top:130.6px" width="17" height="17" viewBox="0 0 17 17"><path d="M4 12.500V4h8.500" stroke="#ececec" fill="none" stroke-width="1.500"/></svg>
<div class="abs" style="left:676.9px;top:130.2px;width:18.3px;height:17.8px;background:#3d3d3d;border-radius:2px"></div>
<svg style="left:677.5px;top:130.6px" width="17" height="17" viewBox="0 0 17 17"><path d="M3 10.500l5.500-5.500 5.500 5.500" stroke="#ececec" fill="none" stroke-width="1.500"/></svg>
<div class="abs" style="left:696.5px;top:130.2px;width:18.3px;height:17.8px;background:#3d3d3d;border-radius:2px"></div>
<svg style="left:697.1px;top:130.6px" width="17" height="17" viewBox="0 0 17 17"><path d="M4.500 4H13v8.500" stroke="#ececec" fill="none" stroke-width="1.500"/></svg>
<div class="abs" style="left:657.3px;top:149.2px;width:18.3px;height:17.8px;background:#3d3d3d;border-radius:2px"></div>
<svg style="left:657.9px;top:149.6px" width="17" height="17" viewBox="0 0 17 17"><path d="M11 3L5.500 8.500 11 14" stroke="#ececec" fill="none" stroke-width="1.500"/></svg>
<div class="abs" style="left:676.9px;top:149.2px;width:18.3px;height:17.8px;background:#3d3d3d;border-radius:2px"></div>
<div class="abs" style="left:696.5px;top:149.2px;width:18.3px;height:17.8px;background:#3d3d3d;border-radius:2px"></div>
<svg style="left:697.1px;top:149.6px" width="17" height="17" viewBox="0 0 17 17"><path d="M6 3l5.500 5.500L6 14" stroke="#ececec" fill="none" stroke-width="1.500"/></svg>
<div class="abs" style="left:657.3px;top:168.2px;width:18.3px;height:17.8px;background:#3d3d3d;border-radius:2px"></div>
<svg style="left:657.9px;top:168.6px" width="17" height="17" viewBox="0 0 17 17"><path d="M4 4.500V13h8.500" stroke="#ececec" fill="none" stroke-width="1.500"/></svg>
<div class="abs" style="left:676.9px;top:168.2px;width:18.3px;height:17.8px;background:#3d3d3d;border-radius:2px"></div>
<svg style="left:677.5px;top:168.6px" width="17" height="17" viewBox="0 0 17 17"><path d="M3 6.500l5.500 5.500 5.500-5.500" stroke="#ececec" fill="none" stroke-width="1.500"/></svg>
<div class="abs" style="left:696.5px;top:168.2px;width:18.3px;height:17.8px;background:#3d3d3d;border-radius:2px"></div>
<svg style="left:697.1px;top:168.6px" width="17" height="17" viewBox="0 0 17 17"><path d="M4.500 13H13V4.500" stroke="#ececec" fill="none" stroke-width="1.500"/></svg>
<svg style="left:598.5px;top:152.2px" width="12" height="12" viewBox="0 0 12 12"><circle cx="6" cy="6" r="3.500" stroke="#ececec" fill="none" stroke-width="1.100"/><path d="M6 0v3.500M6 8.500V12M0 6h3.500M8.500 6H12" stroke="#ececec" stroke-width="1.100"/></svg>
<span class="abs t" style="left:594.6px;top:196.2px;line-height:16px;font-size:11.4px;letter-spacing:-0.43px">Position</span>
<div class="abs" style="left:595.6px;top:215.2px;width:214.2px;height:59px;border:1px solid #424242;border-radius:2px"></div>
<span class="abs t" style="left:604.4px;top:224px;line-height:16px;font-size:11.4px;letter-spacing:-0.44px">x:</span>
<div class="abs" style="left:618.6px;top:223px;width:180.4px;height:18px;background:#353535;border-radius:2px"></div>
<span class="abs t" style="left:621.5px;top:224px;line-height:16px;font-size:11.6px;letter-spacing:-0.47px;color:#e6e6e6">253 px</span>
<svg style="left:789.5px;top:226px" width="7" height="12" viewBox="0 0 7 12"><path d="M0 4.500h7L3.500 1zM0 7.500h7L3.500 11z" fill="#9a9a9a"/></svg>
<span class="abs t" style="left:604.4px;top:248.2px;line-height:16px;font-size:11.4px;letter-spacing:-0.44px">y:</span>
<div class="abs" style="left:618.6px;top:247.2px;width:180.4px;height:18px;background:#353535;border-radius:2px"></div>
<span class="abs t" style="left:621.5px;top:248.2px;line-height:16px;font-size:11.6px;letter-spacing:-0.47px;color:#e6e6e6">210 px</span>
<svg style="left:789.5px;top:250.2px" width="7" height="12" viewBox="0 0 7 12"><path d="M0 4.500h7L3.500 1zM0 7.500h7L3.500 11z" fill="#9a9a9a"/></svg>
<div class="abs" style="left:595.6px;top:287px;width:214.2px;height:38px;border:1px solid #424242;border-radius:2px"></div>
<svg style="left:607.5px;top:299px" width="13" height="13" viewBox="0 0 13 13"><path d="M5.500 1v11.500H.8zM7.500 1v11.500h4.700z" stroke="#ececec" fill="none" stroke-width="1"/><path d="M6.500 0v13" stroke="#ececec" stroke-width=".8"/></svg>
<svg style="left:632.5px;top:299px" width="13" height="13" viewBox="0 0 13 13"><path d="M1 5.500h11.500L1 .8zM1 7.500h11.500L1 12.200z" stroke="#ececec" fill="none" stroke-width="1"/><path d="M0 6.500h13" stroke="#ececec" stroke-width=".8"/></svg>
<svg style="left:675.5px;top:300px" width="11" height="11" viewBox="0 0 11 11"><path d="M3 2.500A4.300 4.300 0 1 0 6 1.200" stroke="#ececec" fill="none" stroke-width="1.100"/><path d="M6.500-.3v3L4.300 1.200z" fill="#ececec"/><circle cx="5.500" cy="5.800" r="1.200" fill="#ececec"/></svg>
<svg style="left:700.5px;top:300px" width="11" height="11" viewBox="0 0 11 11"><path d="M8 2.500A4.300 4.300 0 1 1 5 1.200" stroke="#ececec" fill="none" stroke-width="1.100"/><path d="M4.500-.3v3l2.200-1.500z" fill="#ececec"/><circle cx="5.500" cy="5.800" r="1.200" fill="#ececec"/></svg>
<div class="abs" style="left:679.8px;top:339.8px;width:66.9px;height:19.9px;background:#494949;border:1px solid #3a3a3a;border-radius:2px"></div>
<span class="abs t" style="left:699px;top:341.8px;line-height:16px;font-size:11.8px;letter-spacing:-0.47px">Reset</span>
<div class="abs" style="left:699px;top:356.2px;width:7.5px;height:0.8px;background:#cfcfcf"></div>
<div class="abs" style="left:752.4px;top:339.8px;width:66px;height:19.9px;background:#494949;border:1px solid #3a3a3a;border-radius:2px"></div>
<span class="abs t" style="left:771.15px;top:341.8px;line-height:16px;font-size:11.8px;letter-spacing:-0.2px">Apply</span>
<div class="abs" style="left:771.15px;top:356.2px;width:7.5px;height:0.8px;background:#cfcfcf"></div>

</div>

<!-- ============ right dockers ============ -->
<div id="rightdock" class="abs">
<div class="abs" style="left:0px;top:20.8px;width:217px;height:1px;background:#3b3b3b"></div>
<div class="abs" style="left:2.5px;top:1px;width:63.5px;height:20.5px;background:#4a4a4a;border:1px solid #3b3b3b;border-bottom:none;border-radius:3px 3px 0 0"></div>
<div class="abs" style="left:67.8px;top:3px;width:53.5px;height:18px;background:#424242;border:1px solid #3b3b3b;border-bottom:none;border-radius:3px 3px 0 0"></div>
<div class="abs" style="left:124.5px;top:3px;width:78px;height:18px;background:#424242;border:1px solid #3b3b3b;border-bottom:none;border-radius:3px 3px 0 0"></div>
<span class="abs t" style="left:11.5px;top:3.5px;line-height:16px;font-size:11.4px;letter-spacing:-0.4px">Overview</span>
<span class="abs t" style="left:76px;top:4.5px;line-height:16px;font-size:11.4px;letter-spacing:-0.5px">Arrange</span>
<span class="abs t" style="left:133.8px;top:4.5px;line-height:16px;font-size:11.4px;letter-spacing:-0.46px">Docker Lock</span>
<div class="abs" style="left:1.5px;top:22px;width:215.5px;height:167.5px;background:#3a3a3a;border:1px dotted #4c6e8c"></div>
<svg style="left:1.5px;top:22px" width="215.5" height="167.5" viewBox="1034.5 133 215.5 167.5"><g transform="translate(953.5 23) scale(.397)"><path d="M304.6 308.6C304.8 308.3 305.2 307.2 306.0 306.9C306.8 306.6 308.1 306.1 309.6 306.6C311.1 307.1 312.9 308.2 315.0 310.0C317.1 311.8 318.3 312.8 321.9 317.3C325.5 321.8 332.1 330.1 336.8 337.1C341.6 344.1 346.3 352.4 350.4 359.4C354.5 366.4 358.2 372.2 361.5 379.2C364.8 386.2 367.9 394.0 370.2 401.4C372.5 408.8 373.5 415.8 375.1 423.7C376.8 431.6 377.8 441.5 380.1 448.5C382.4 455.5 384.9 460.4 388.8 465.8C392.7 471.2 399.4 477.2 403.6 480.6C407.8 484.1 412.3 485.5 414.0 486.5C414.8 485.9 417.9 484.4 419.0 483.0C420.1 481.6 419.8 479.4 420.5 478.0C421.2 476.6 422.3 475.4 423.4 474.5C424.5 473.6 425.8 472.7 427.1 472.7C428.4 472.7 429.9 473.4 431.0 474.5C432.1 475.6 432.7 477.3 433.5 479.0C434.3 480.7 434.8 483.0 436.0 484.5C437.2 486.0 439.2 487.3 441.0 488.0C442.8 488.7 445.0 488.8 447.0 488.5C449.0 488.2 451.1 486.8 453.0 486.5C454.9 486.2 457.0 486.1 458.6 486.5C460.2 486.9 461.7 487.9 462.5 489.0C463.3 490.1 463.7 491.3 463.3 493.0C462.9 494.7 461.4 497.1 460.0 499.0C458.6 500.9 456.2 502.9 455.0 504.5C453.8 506.1 452.8 507.3 452.8 508.5C452.8 509.7 453.8 510.7 455.0 511.5C456.2 512.3 459.2 513.2 460.0 513.5C461.3 514.0 464.9 515.7 468.0 516.5C471.1 517.3 474.7 518.0 478.4 518.2C482.1 518.5 486.7 518.2 490.0 518.0C493.3 517.8 494.9 517.5 498.2 516.7C501.5 515.9 506.2 514.8 509.8 513.0C513.4 511.2 517.1 508.3 520.0 506.0C522.9 503.7 522.6 502.8 527.1 499.4C531.6 496.0 539.5 489.9 546.9 485.8C554.3 481.7 563.5 477.4 571.7 474.7C580.0 472.0 587.7 470.8 596.4 469.7C605.1 468.6 614.6 467.8 623.7 468.0C632.8 468.2 643.1 469.8 650.9 471.0C658.7 472.2 666.0 474.2 670.7 475.4C675.5 476.6 677.5 477.4 679.4 478.4C681.3 479.4 681.7 480.4 682.0 481.5C682.3 482.6 681.2 484.2 681.1 484.8C680.8 484.3 680.1 482.5 679.0 481.8C677.9 481.1 677.4 480.3 674.4 480.8C671.4 481.3 665.5 481.9 660.8 484.6C656.0 487.3 650.2 491.9 645.9 496.9C641.6 501.8 637.5 508.5 634.8 514.3C632.1 520.1 630.6 527.3 629.9 531.6C629.2 535.9 630.0 537.5 630.5 540.0C631.0 542.5 632.7 545.5 633.1 546.6C632.6 545.8 631.0 542.9 630.0 541.8C629.0 540.7 630.1 540.1 627.4 540.2C624.7 540.4 619.0 540.4 613.8 542.7C608.6 545.0 601.3 549.6 596.4 553.9C591.5 558.2 587.4 563.8 584.1 568.7C580.8 573.7 578.2 579.4 576.6 583.6C575.0 587.8 574.6 592.0 574.2 593.7C573.8 592.8 572.8 589.5 572.0 588.0C571.2 586.5 572.1 586.8 569.2 584.8C566.3 582.8 560.2 578.6 554.4 576.1C548.6 573.6 541.2 571.4 534.6 570.0C528.0 568.6 521.7 567.5 514.8 567.5C507.9 567.5 500.2 568.6 493.3 570.0C486.4 571.4 479.3 573.4 473.5 576.1C467.7 578.8 463.2 582.7 458.6 586.0C454.1 589.3 449.1 592.6 446.2 595.9C443.3 599.2 442.1 604.3 441.3 606.0C441.6 604.3 443.0 600.0 443.0 595.9C443.0 591.8 442.6 585.4 441.3 581.1C440.0 576.8 437.6 572.3 435.1 570.0C432.6 567.7 429.5 567.3 426.4 567.5C423.3 567.7 418.7 569.5 416.5 571.2C414.3 573.0 413.8 575.9 413.0 578.0C412.2 580.1 411.8 582.7 411.6 583.6C411.1 582.7 409.7 579.0 408.5 578.0C407.3 577.0 405.9 577.2 404.5 577.5C403.1 577.8 401.1 579.6 400.4 580.0C400.8 579.0 402.6 575.9 403.0 574.0C403.4 572.1 403.9 570.0 402.9 568.7C401.8 567.4 398.5 566.0 396.7 566.2C394.9 566.4 393.0 568.5 392.0 570.0C391.0 571.5 390.8 574.2 390.5 575.0C390.1 574.1 388.9 570.9 388.0 569.8C387.1 568.7 386.0 568.4 385.0 568.5C384.0 568.6 382.4 569.9 381.9 570.2C382.5 569.3 384.5 566.9 385.5 565.0C386.5 563.1 388.7 561.9 388.1 558.8C387.5 555.7 385.0 549.3 381.9 546.4C378.8 543.5 374.0 541.5 369.5 541.5C365.0 541.5 358.4 544.7 354.7 546.4C351.0 548.1 349.3 549.8 347.5 551.5C345.7 553.2 344.6 555.7 344.0 556.5C344.2 555.5 344.2 552.2 345.0 550.5C345.8 548.8 347.5 547.9 348.5 546.0C349.5 544.1 351.1 544.3 350.9 539.0C350.7 533.7 349.1 521.6 347.2 514.3C345.3 507.0 341.9 500.2 339.3 495.0C336.7 489.8 335.1 487.6 331.8 483.1C328.5 478.7 324.0 472.6 319.5 468.3C315.0 464.0 310.0 460.2 304.6 457.1C299.2 454.0 291.5 451.1 287.3 449.7C283.1 448.3 281.4 448.5 279.5 448.6C277.6 448.7 276.6 449.6 275.8 450.3C275.0 451.0 275.0 452.6 274.8 453.0C275.1 452.4 275.8 450.8 276.8 449.6C277.9 448.4 278.9 448.2 281.1 446.0C283.3 443.8 287.3 440.6 289.8 436.1C292.3 431.6 294.9 425.0 295.9 418.8C296.9 412.6 296.9 405.2 295.9 399.0C294.9 392.8 291.7 385.4 289.8 381.6C287.9 377.8 286.1 377.4 284.5 376.2C282.9 375.0 281.3 374.4 280.2 374.4C279.1 374.4 278.5 376.1 278.1 376.4C278.4 375.9 278.7 373.8 279.6 373.3C280.5 372.8 280.7 374.3 283.6 373.2C286.5 372.1 293.1 370.4 297.2 366.8C301.3 363.2 305.6 357.3 308.3 351.9C311.0 346.5 312.5 340.0 313.3 334.6C314.1 329.2 313.8 323.7 313.3 319.8C312.8 315.9 311.6 313.4 310.5 311.5C309.4 309.6 308.0 309.1 307.0 308.6C306.0 308.1 305.0 308.6 304.6 308.6Z" fill="#000"/><path d="M426.500 498.500q3-4 6-1.500" stroke="#ddd" stroke-width="2.200" fill="none"/><circle cx="432" cy="502" r="1.200" fill="#ddd"/></g></svg>
<div class="abs" style="left:3.9px;top:194.3px;width:98.4px;height:16px;background:#434343;border:1px solid #3a3a3a;border-radius:2px"></div>
<span class="abs t" style="left:7.3px;top:194.3px;line-height:16px;font-size:12.4px;letter-spacing:-0.51px;color:#e4e4e4">200.0%</span>
<svg style="left:91px;top:200.5px" width="7" height="4" viewBox="0 0 7 4"><path d="M0 0h7L3.500 4z" fill="#9a9a9a"/></svg>
<div class="abs" style="left:104.6px;top:200.6px;width:90.4px;height:2.6px;background:#353535;border-radius:1px"></div>
<div class="abs" style="left:104.6px;top:200.6px;width:28px;height:2.6px;background:#4b7ba6;border-radius:1px"></div>
<div class="abs" style="left:132px;top:196.5px;width:8.6px;height:11px;background:#5c5c5c;border-radius:2px"></div>
<svg style="left:198.5px;top:195.5px" width="14" height="13" viewBox="0 0 14 13"><rect x=".7" y=".7" width="12.600" height="8.600" stroke="#e4e4e4" fill="none" stroke-width="1.200"/><path d="M7 9.300v2.500M3.500 12.300h7M7 3v4M5 5h4" stroke="#e4e4e4" stroke-width="1.200"/></svg>
<div class="abs" style="left:6px;top:216px;width:16.5px;height:16.5px;background:#2c2c2c;border-radius:50%"></div>
<svg style="left:6px;top:216px" width="16.5" height="16.5" viewBox="0 0 16.5 16.5"><path d="M7.500 8.250h7" stroke="#fff" stroke-width="1"/><circle cx="7.500" cy="8.250" r="1" fill="#fff"/><circle cx="14.500" cy="8.250" r="1" fill="#fff"/></svg>
<div class="abs" style="left:28px;top:216px;width:67.5px;height:16.5px;background:#353535;border-radius:2px"></div>
<span class="abs t" style="left:30px;top:216.2px;line-height:16px;font-size:12.4px;letter-spacing:-0.15px;color:#e4e4e4">0.00˚</span>
<svg style="left:86.5px;top:218px" width="7" height="12" viewBox="0 0 7 12"><path d="M0 4.500h7L3.500 1zM0 7.500h7L3.500 11z" fill="#9a9a9a"/></svg>
<svg style="left:139.5px;top:217px" width="13" height="13" viewBox="0 0 13 13"><path d="M6.500 0v13" stroke="#e4e4e4" stroke-width="1.200"/><rect x=".7" y="2.700" width="4" height="8" stroke="#e4e4e4" fill="none" stroke-width="1.200"/><rect x="8.300" y="2.700" width="4" height="8" stroke="#e4e4e4" fill="none" stroke-width="1.200"/></svg>
<div class="abs" style="left:196px;top:214px;width:19.5px;height:19px;background:#414141;border-radius:2px"></div>
<svg style="left:199.5px;top:217.5px" width="13" height="13" viewBox="0 0 13 13"><path d="M8 .5l4.500 4.500-1.300.7-2.200-.3-1.800 1.800.3 2.600-1.100.9L1.800 6l.9-1.100 2.600.3 1.800-1.800L6.800 1.500z" fill="#e4e4e4"/><path d="M4.200 8.800L.8 12.200" stroke="#e4e4e4" stroke-width="1.300" stroke-linecap="round"/></svg>
<div class="abs" style="left:0px;top:257.3px;width:217px;height:1px;background:#3b3b3b"></div>
<div class="abs" style="left:2.7px;top:237.5px;width:39px;height:20.5px;background:#4a4a4a;border:1px solid #3b3b3b;border-bottom:none;border-radius:3px 3px 0 0"></div>
<span class="abs t" style="left:12.95px;top:240px;line-height:16px;font-size:11.4px;letter-spacing:-0.73px">La...</span>
<div class="abs" style="left:44px;top:239.5px;width:51.5px;height:18px;background:#424242;border:1px solid #3b3b3b;border-bottom:none;border-radius:3px 3px 0 0"></div>
<span class="abs t" style="left:55px;top:241px;line-height:16px;font-size:11.4px;letter-spacing:-0.67px">Com...</span>
<div class="abs" style="left:97.7px;top:239.5px;width:54px;height:18px;background:#424242;border:1px solid #3b3b3b;border-bottom:none;border-radius:3px 3px 0 0"></div>
<span class="abs t" style="left:107.2px;top:241px;line-height:16px;font-size:11.4px;letter-spacing:-0.46px">Blend...</span>
<div class="abs" style="left:153.8px;top:239.5px;width:64px;height:18px;background:#424242;border:1px solid #3b3b3b;border-bottom:none;border-radius:3px 3px 0 0"></div>
<span class="abs t" style="left:164.8px;top:241px;line-height:16px;font-size:11.4px;letter-spacing:-0.49px">Grid an...</span>
<div class="abs" style="left:3.9px;top:260.7px;width:33.5px;height:23px;background:#464646;border:1px solid #3c3c3c;border-radius:2px"></div>
<div class="abs" style="left:7px;top:265.5px;width:14px;height:13.5px;background:#3e3e3e;border:1px solid #2c2c2c"></div>
<svg style="left:25.5px;top:270.5px" width="6" height="4" viewBox="0 0 6 4"><path d="M0 0h6L3 4z" fill="#9a9a9a"/></svg>
<div class="abs" style="left:39.4px;top:260.7px;width:147.6px;height:23px;background:#434343;border:1px solid #3a3a3a;border-radius:2px"></div>
<span class="abs t" style="left:43.5px;top:264.3px;line-height:16px;font-size:12.4px;letter-spacing:-0.66px;color:#e4e4e4">Normal</span>
<svg style="left:175.5px;top:270.5px" width="7" height="4" viewBox="0 0 7 4"><path d="M0 0h7L3.500 4z" fill="#9a9a9a"/></svg>
<svg style="left:195px;top:265px" width="14" height="16" viewBox="0 0 14 16"><path d="M1 1h12L8.500 7.500V13L5.500 14.500V7.500z" stroke="#e4e4e4" fill="none" stroke-width="1.300" stroke-linejoin="round"/></svg>
<svg style="left:210px;top:280px" width="4" height="3" viewBox="0 0 4 3"><path d="M0 0h4L2 3z" fill="#9a9a9a"/></svg>
<svg style="left:6px;top:290.5px" width="18" height="18" viewBox="0 0 18 18"><rect x="0" y="5.500" width="12" height="12" rx="2" fill="#8a8a8a"/><rect x="4" y="3.500" width="11" height="11" rx="1" fill="#e8e8e8"/><rect x="4.500" y="1" width="12.500" height="12.500" rx="2" stroke="#e4e4e4" fill="none" stroke-width="1.300" stroke-dasharray="2.500 1.600"/></svg>
<div class="abs" style="left:29px;top:289px;width:158px;height:22.7px;background:#353535;border-radius:2px"></div>
<div class="abs" style="left:29px;top:289px;width:147.3px;height:22.7px;background:#4b7ba6"></div>
<span class="abs t" style="left:66.5px;top:292.3px;line-height:16px;font-size:11.8px;letter-spacing:-0.57px;color:#eef2f6;white-space:pre">Opacity:  100%</span>
<svg style="left:178.5px;top:293.5px" width="7" height="14" viewBox="0 0 7 14"><path d="M0 5h7L3.500 1.500z" fill="#6a6a6a"/><path d="M0 9h7L3.500 12.500z" fill="#b0b0b0"/></svg>
<svg style="left:197px;top:295px" width="12" height="11" viewBox="0 0 12 11"><path d="M0 1.500h12M0 5.500h12M0 9.500h12" stroke="#e4e4e4" stroke-width="1.700"/></svg>
<svg style="left:210px;top:308px" width="4" height="3" viewBox="0 0 4 3"><path d="M0 0h4L2 3z" fill="#9a9a9a"/></svg>
<div class="abs" style="left:3px;top:315px;width:214px;height:308px;background:#393939"></div>
<svg style="left:5.5px;top:320.5px" width="14" height="12" viewBox="0 0 14 12"><path d="M.5 6C3 2 5 1 7 1s4 1 6.500 5C11 10 9 11 7 11S3 10 .5 6z" fill="#e4e4e4"/><circle cx="7" cy="6" r="2.600" fill="#393939"/><circle cx="7" cy="6" r="1.200" fill="#e4e4e4"/></svg>
<div class="abs" style="left:25px;top:320px;width:12.5px;height:12.5px;background:#3f3f3f"></div>
<div class="abs" style="left:42.8px;top:320.2px;width:17.2px;height:12.2px;background:#fff"></div>
<svg style="left:42.8px;top:320.2px" width="17.2" height="12.2" viewBox="0 0 17.2 12.2"><path d="M1 1c1 3 2 6 5 8s8 2 10.500-1l.2 3.500H1z" fill="#000"/><path d="M3 2l2 3M12 4l3 2" stroke="#000" stroke-width="1"/></svg>
<svg style="left:65.5px;top:317px" width="9" height="9" viewBox="0 0 9 9"><path d="M1 1.500h6.500v5L5 8.500 1.500 4.500" stroke="#e4e4e4" fill="none" stroke-width="1"/><path d="M1.500 1.500l4 4" stroke="#e4e4e4" stroke-width="1"/></svg>
<span class="abs t" style="left:81.7px;top:318.5px;line-height:16px;font-size:11.4px;letter-spacing:-0.47px;color:#dcdcdc">Copy of Paint L...</span>
<svg style="left:168.5px;top:320.5px" width="11" height="11" viewBox="0 0 11 11"><rect x=".5" y="5" width="9" height="6" fill="#686868"/><path d="M5.500 5V3.500a2.200 2.200 0 0 1 4.400 0" stroke="#686868" stroke-width="1.200" fill="none"/></svg>
<span class="abs t" style="left:183.5px;top:318px;line-height:16px;font-size:14px;letter-spacing:1.41px;color:#686868;font-family:'DejaVu Sans',sans-serif;font-style:italic">α</span>
<svg style="left:199.5px;top:320px" width="13" height="13" viewBox="0 0 13 13"><rect width="13" height="13" rx="2" fill="#505050"/><path d="M2 2h3v3H2zM8 2h3v3H8zM5 5h3v3H5zM2 8h3v3H2zM8 8h3v3H8z" fill="#686868"/></svg>
<div class="abs" style="left:40px;top:337.7px;width:177px;height:22.6px;background:#4b7ba6"></div>
<svg style="left:6.5px;top:342.5px" width="12" height="12" viewBox="0 0 12 12"><circle cx="6" cy="6" r="5" fill="none" stroke="#5a5a5a" stroke-width="1.100"/></svg>
<svg style="left:26px;top:344px" width="10" height="9" viewBox="0 0 10 9"><path d="M1 4.500L4 8 9 1" stroke="#e4e4e4" fill="none" stroke-width="1.500"/></svg>
<div class="abs" style="left:42.8px;top:342.2px;width:17.2px;height:12.2px;background:#c9d0d8"></div>
<svg style="left:42.8px;top:342.2px" width="17.2" height="12.2" viewBox="0 0 17.2 12.2"><rect x="1" y="1" width="15.200" height="10.200" fill="#7f8f9f"/><path d="M2 3l6 4.500L15 2.500M2 9.500l4-3M15 9.500l-4.500-3.500" stroke="#d5dce4" stroke-width="1" fill="none"/></svg>
<svg style="left:65.5px;top:339px" width="9" height="9" viewBox="0 0 9 9"><path d="M1 1.500h6.500v5L5 8.500 1.500 4.500" stroke="#6a94bb" fill="none" stroke-width="1"/></svg>
<span class="abs t" style="left:81.7px;top:340.5px;line-height:16px;font-size:11.4px;letter-spacing:-0.5px;color:#a9c2da;font-weight:bold">Paint Layer 1 ...</span>
<svg style="left:168.5px;top:342.5px" width="11" height="11" viewBox="0 0 11 11"><rect x=".5" y="5" width="9" height="6" fill="#9dbbd6"/><path d="M5.500 5V3.500a2.200 2.200 0 0 1 4.400 0" stroke="#9dbbd6" stroke-width="1.200" fill="none"/></svg>
<span class="abs t" style="left:183.5px;top:340px;line-height:16px;font-size:14px;letter-spacing:1.41px;color:#9dbbd6;font-family:'DejaVu Sans',sans-serif;font-style:italic">α</span>
<svg style="left:199.5px;top:342px" width="13" height="13" viewBox="0 0 13 13"><rect width="13" height="13" rx="2" fill="#6a96be"/><path d="M2 2h3v3H2zM8 2h3v3H8zM5 5h3v3H5zM2 8h3v3H2zM8 8h3v3H8z" fill="#9dbbd6"/></svg>
<div class="abs" style="left:0px;top:623px;width:217px;height:27px;background:#474747"></div>
<svg style="left:7.5px;top:629px" width="14" height="14" viewBox="0 0 14 14"><path d="M7 0v14M0 7h14" stroke="#e0e0e0" stroke-width="1.500"/></svg>
<svg style="left:29.5px;top:634.5px" width="6" height="4" viewBox="0 0 6 4"><path d="M0 0h6L3 4z" fill="#8a8a8a"/></svg>
<svg style="left:42.5px;top:629.5px" width="16" height="13" viewBox="0 0 16 13"><path d="M0 13V.5h5.500l1.500 2H16V13z" fill="#e0e0e0"/></svg>
<svg style="left:68.5px;top:628px" width="16" height="16" viewBox="0 0 16 16"><rect x=".8" y="5" width="10" height="10" fill="none" stroke="#e0e0e0" stroke-width="1.400"/><rect x="5" y=".8" width="10" height="10" fill="#474747" stroke="#e0e0e0" stroke-width="1.400"/></svg>
<svg style="left:95px;top:631.5px" width="17" height="9" viewBox="0 0 17 9"><path d="M.8.800L8.500 8 16.200.8" fill="none" stroke="#e0e0e0" stroke-width="1.500"/></svg>
<svg style="left:121.5px;top:631.5px" width="17" height="9" viewBox="0 0 17 9"><path d="M.8 8.200L8.500 1l7.700 7.200" fill="none" stroke="#e0e0e0" stroke-width="1.500"/></svg>
<svg style="left:149px;top:629.5px" width="16" height="13" viewBox="0 0 16 13"><path d="M0 2h16M0 6.500h16M0 11h16" stroke="#e0e0e0" stroke-width="1.300"/><path d="M9.500 0v4M4 4.500v4M7.500 9v4" stroke="#e0e0e0" stroke-width="2"/></svg>
<svg style="left:171.5px;top:634.5px" width="6" height="4" viewBox="0 0 6 4"><path d="M0 0h6L3 4z" fill="#8a8a8a"/></svg>
<svg style="left:196.5px;top:628px" width="13" height="15" viewBox="0 0 13 15"><path d="M0 3h13M4 3V1h5v2" stroke="#e0e0e0" stroke-width="1.500" fill="none"/><path d="M1.300 5h10.400l-.7 10H2z" fill="#e0e0e0"/></svg>

</div>

<!-- ============ dock ============ -->
<div id="dockbg" class="abs"></div>
<div id="dock">
<div class="abs" style="left:0px;top:798px;width:1250px;height:10px;background:linear-gradient(90deg,#161a12 0,#1e2216 300px,#5a3816 360px,#8a5220 450px,#94561e 560px,#5a3a1a 680px,#6a421a 820px,#4a3216 1000px,#2c2614 1150px,#241f12 1250px)"></div>
<div class="abs" style="left:0px;top:760px;width:1250px;height:43.5px;background:linear-gradient(90deg,#484a3f 0,#45473c 280px,#5d4a38 325px,#94603e 380px,#9c643e 520px,#8a5a3c 640px,#7a543a 800px,#66503a 880px,#52503c 940px,#484a3a 1050px,#42443a 1250px);border-top:1px solid #2a2a26;border-radius:0 0 4px 9px"></div>
<div class="abs" style="left:0px;top:761px;width:1250px;height:1px;background:rgba(255,255,255,.10)"></div>
<div class="abs" style="left:0px;top:750.5px;width:10px;height:10px;background:radial-gradient(circle at 100% 0,rgba(0,0,0,0) 9.5px,#0a0a0a 10.5px)"></div>
<div class="abs" style="left:1240px;top:750.5px;width:10px;height:10px;background:radial-gradient(circle at 0 0,rgba(0,0,0,0) 9.5px,#0c1412 10.5px)"></div>
<svg style="left:0.05px;top:769.55px" width="25.5" height="25.5" viewBox="0 0 100 100"><rect width="100" height="100" rx="22.5" fill="#1d9bf2" /><path d="M52 0H78Q100 0 100 22V78Q100 100 78 100H56C50 80 50 62 56 56H44C44 36 46 16 52 0z" fill="#cfe6f8"/><path d="M28 32v12M70 32v12" stroke="#1a3a5a" stroke-width="5" stroke-linecap="round"/><path d="M22 66c16 14 40 14 56 0" stroke="#1a3a5a" stroke-width="4.500" fill="none" stroke-linecap="round"/></svg>
<svg style="left:32.05px;top:769.55px" width="25.5" height="25.5" viewBox="0 0 100 100"><rect width="100" height="100" rx="22.5" fill="#f2f1f0" /><rect x="20" y="24" width="16" height="14" rx="4" fill="#9a9aa0"/><rect x="42" y="24" width="16" height="14" rx="4" fill="#9a9aa0"/><rect x="64" y="24" width="16" height="14" rx="4" fill="#9a9aa0"/><rect x="20" y="44" width="16" height="14" rx="4" fill="#ff8a3a"/><rect x="42" y="44" width="16" height="14" rx="4" fill="#ff5a9a"/><rect x="64" y="44" width="16" height="14" rx="4" fill="#2ad0a0"/><rect x="20" y="64" width="16" height="14" rx="4" fill="#ffb020"/><rect x="42" y="64" width="16" height="14" rx="4" fill="#5a8aff"/><rect x="64" y="64" width="16" height="14" rx="4" fill="#b0b0b8"/></svg>
<svg style="left:64.55px;top:769.55px" width="25.5" height="25.5" viewBox="0 0 100 100"><rect width="100" height="100" rx="22.5" fill="#1c7a48" /><path d="M18 30l14 38 10-22 10 30 10-16 16-30" stroke="#fff" stroke-width="9" fill="none" stroke-linejoin="round" stroke-linecap="round"/></svg>
<svg style="left:97.05px;top:769.55px" width="25.5" height="25.5" viewBox="0 0 100 100"><rect width="100" height="100" rx="22.5" fill="#f7f4f2" /><path d="M50 12l12 4 8-4 12 16-4 10 4 14-10 24-22 14-22-14-10-24 4-14-4-10 12-16 8 4z" fill="#fb4a26"/><path d="M50 34l12 4-4 18 4 8-12 8-12-8 4-8-4-18z" fill="#fff"/></svg>
<svg style="left:129.55px;top:769.55px" width="25.5" height="25.5" viewBox="0 0 100 100"><rect width="100" height="100" rx="22.5" fill="url(#dmail)" /><defs><linearGradient id="dmail" x1="0" y1="0" x2="0" y2="1"><stop offset="0" stop-color="#1a7cf4"/><stop offset="1" stop-color="#5ab8fc"/></linearGradient></defs><rect x="18" y="30" width="64" height="42" rx="6" fill="#e8f4ff"/><path d="M20 34l30 22 30-22" stroke="#8cc4f4" stroke-width="4" fill="none"/></svg>
<svg style="left:161.55px;top:769.55px" width="25.5" height="25.5" viewBox="0 0 100 100"><rect width="100" height="100" rx="22.5" fill="#f6f5fa" /><path d="M22 32v36q0 6 6 6h44q6 0 6-6V32L54 54q-4 3-8 0z" fill="#6d4aff"/><path d="M22 32l24 22q4 3 8 0l24-22v36q0 6-6 6H52z" fill="#9a7cff" opacity=".55"/></svg>
<svg style="left:194.15px;top:769.55px" width="25.5" height="25.5" viewBox="0 0 100 100"><rect width="100" height="100" rx="22.5" fill="#1e1e1c" /><circle cx="32" cy="34" r="10" fill="#f0c020"/><rect x="28" y="40" width="8" height="40" fill="#f0c020"/><circle cx="50" cy="32" r="10" fill="#38b048"/><rect x="46" y="40" width="8" height="44" fill="#38b048"/><circle cx="68" cy="34" r="10" fill="#2a80e0"/><rect x="64" y="40" width="8" height="40" fill="#2a80e0"/></svg>
<svg style="left:226.65px;top:769.55px" width="25.5" height="25.5" viewBox="0 0 100 100"><rect width="100" height="100" rx="22.5" fill="#3a56d8" /><path d="M26 24h48v34q0 14-24 24-24-10-24-24z" fill="#bccaf6"/><circle cx="50" cy="44" r="8" fill="#2a3fae"/><rect x="46.500" y="46" width="7" height="18" fill="#2a3fae"/></svg>
<svg style="left:259.15px;top:769.55px" width="25.5" height="25.5" viewBox="0 0 100 100"><rect width="100" height="100" rx="22.5" fill="#f8f8f8" /><text x="50" y="30" font-family="Liberation Sans,sans-serif" font-size="20" text-anchor="middle" fill="#f03a30">lun.</text><text x="50" y="82" font-family="Liberation Sans,sans-serif" font-size="56" text-anchor="middle" fill="#2a2a2a">2</text></svg>
<svg style="left:291.95px;top:769.55px" width="25.5" height="25.5" viewBox="0 0 100 100"><rect width="100" height="100" rx="22.5" fill="#cfccc2" /><circle cx="46" cy="40" r="15" fill="#f4f2ec"/><path d="M16 88c2-24 16-30 30-30s28 6 30 30z" fill="#f4f2ec"/><rect x="88" y="14" width="12" height="24" fill="#f0a030"/><rect x="88" y="38" width="12" height="24" fill="#58b8f0"/><rect x="88" y="62" width="12" height="24" fill="#58c868"/></svg>
<svg style="left:324.45px;top:764.3px" width="30.5" height="30.5" viewBox="0 0 100 100"><rect width="100" height="100" rx="22.5" fill="#f6f6f6" /><circle cx="22" cy="28" r="6" fill="#2a7cf6"/><circle cx="22" cy="52" r="6" fill="#f0483a"/><circle cx="22" cy="76" r="6" fill="#f09a30"/><path d="M36 28h46M36 52h46M36 76h46" stroke="#d4d4d4" stroke-width="3"/></svg>
<div class="abs" style="left:343.5px;top:762.5px;width:13.5px;height:13.5px;background:#f03a36;border-radius:50%"></div>
<span class="abs abs" style="left:343.5px;top:761.3px;line-height:16px;font-size:9.5px;letter-spacing:0;color:#fff;width:13.5px;text-align:center">1</span>
<svg style="left:363.7px;top:758.4px" width="35.4" height="35.4" viewBox="0 0 100 100"><rect width="100" height="100" rx="22.5" fill="#f8f7f4" /><path d="M0 30V22Q0 0 22 0H78Q100 0 100 22V30z" fill="#fcd535"/><path d="M10 50h80M10 68h80M10 86h80" stroke="#dcdad4" stroke-width="2.500"/></svg>
<svg style="left:409.3px;top:755.2px" width="38.4" height="38.4" viewBox="0 0 100 100"><rect width="100" height="100" rx="22.5" fill="#f4f4f4" /><path d="M18 34V26q0-8 8-8h8M66 18h8q8 0 8 8v8M82 66v8q0 8-8 8h-8M34 82h-8q-8 0-8-8v-8" stroke="#b8b8b8" stroke-width="5" fill="none" stroke-linecap="round"/><path d="M30 44q0-5 5-5h6l4-6h12l4 6h6q5 0 5 5v18q0 5-5 5H35q-5 0-5-5z" fill="#3a3a3c"/><circle cx="51" cy="53" r="9" fill="#8e8e92"/><circle cx="51" cy="53" r="5" fill="#2a2a2c"/><circle cx="66" cy="45" r="2" fill="#f0b030"/></svg>
<svg style="left:457.8px;top:757.2px" width="36.4" height="36.4" viewBox="0 0 100 100"><rect width="100" height="100" rx="22.5" fill="url(#dkin)" /><defs><linearGradient id="dkin" x1="0" y1="0" x2=".6" y2="1"><stop offset="0" stop-color="#1a86d8"/><stop offset=".55" stop-color="#6cc0ec"/><stop offset="1" stop-color="#bfe6f6"/></linearGradient></defs><circle cx="38" cy="22" r="10" fill="#0a0a0a"/><path d="M30 34c-10 8-12 28-8 44l-16 14v8h70v-6c-8-8-20-12-32-12l4-16 14 4 10-16-6-4-8 12-12-6c-2-10-8-20-16-22z" fill="#0a0a0a"/><path d="M62 38l10-10 4 4-8 12z" fill="#0a0a0a"/></svg>
<svg style="left:505.3px;top:761.6px" width="32.4" height="32.4" viewBox="0 0 100 100"><rect width="100" height="100" rx="22.5" fill="url(#dbk)" /><defs><linearGradient id="dbk" x1="0" y1="0" x2="0" y2="1"><stop offset="0" stop-color="#ff9a1e"/><stop offset="1" stop-color="#f4721a"/></linearGradient></defs><path d="M50 32c-8-6-20-8-32-6v42c12-2 24 0 32 6 8-6 20-8 32-6V26c-12-2-24 0-32 6z" fill="#fff6ea"/><path d="M50 32v42" stroke="#f0b070" stroke-width="2"/></svg>
<svg style="left:546.1px;top:768.4px" width="25.8" height="25.8" viewBox="0 0 100 100"><rect width="100" height="100" rx="22.5" fill="#1c5f90" /><path d="M50 10l40 40-40 40-40-40z" fill="#164a72"/><path d="M58 26L34 50l24 24" stroke="#fff" stroke-width="9" fill="none"/><circle cx="66" cy="50" r="8" fill="#fff"/></svg>
<svg style="left:580.1px;top:769px" width="25" height="25" viewBox="0 0 100 100"><rect width="100" height="100" rx="22.5" fill="#0c0c0c" /><text x="50" y="46" font-family="Liberation Sans,sans-serif" font-size="36" text-anchor="middle" fill="#fff">XP</text><text x="50" y="80" font-family="Liberation Sans,sans-serif" font-size="36" text-anchor="middle" fill="#fff">pen</text></svg>
<svg style="left:612.25px;top:769.55px" width="25.5" height="25.5" viewBox="0 0 100 100"><rect width="100" height="100" rx="22.5" fill="url(#dkr)" /><defs><linearGradient id="dkr" x1="0" y1="0" x2="1" y2="1"><stop offset="0" stop-color="#ff5ad8"/><stop offset=".45" stop-color="#fbe6f4"/><stop offset=".7" stop-color="#7ae0f0"/><stop offset="1" stop-color="#f8f060"/></linearGradient></defs><path d="M20 16l44 46-10 8z" fill="#3a3a4a"/><path d="M56 66l10-8c10 6 12 16 8 22-8 4-16-2-18-14z" fill="#2a2a34"/></svg>
<svg style="left:644.85px;top:769.55px" width="25.5" height="25.5" viewBox="0 0 100 100"><rect width="100" height="100" rx="22.5" fill="#f4f4f4" /><path d="M74 42c-8-12-30-12-40-2s-6 26 8 28 26-8 22-18-18-10-24-2" stroke="#8e8e8e" stroke-width="9" fill="none" stroke-linecap="round"/></svg>
<svg style="left:676.85px;top:769.55px" width="25.5" height="25.5" viewBox="0 0 100 100"><rect width="100" height="100" rx="22.5" fill="#d8d8d8" /><circle cx="50" cy="50" r="38" fill="#fbfbfb"/><path d="M30 72c4-20 20-40 40-48-4 18-18 38-40 48z" fill="#2a6ab8"/><path d="M20 62a34 34 0 0 1 60-24" stroke="#7a8a9a" stroke-width="3" fill="none"/></svg>
<svg style="left:709.65px;top:769.55px" width="25.5" height="25.5" viewBox="0 0 100 100"><rect width="100" height="100" rx="22.5" fill="#2c2c2c" /><path d="M18 58l30-24H30l-4-6h36l22 18c8 8 6 22-6 28s-28 2-34-10l-18 0z" fill="#f5792a"/><circle cx="60" cy="56" r="14" fill="#fff"/><circle cx="60" cy="56" r="8" fill="#2a5fa8"/></svg>
<svg style="left:742.25px;top:769.55px" width="25.5" height="25.5" viewBox="0 0 100 100"><rect width="100" height="100" rx="22.5" fill="#262626" /><circle cx="52" cy="44" r="22" stroke="#fff" stroke-width="8" fill="none"/><path d="M30 40v44h28" stroke="#fff" stroke-width="8" fill="none"/><circle cx="52" cy="44" r="7" fill="#fff"/><path d="M72 62l4 8 8 4-8 4-4 8-4-8-8-4 8-4z" fill="#fff"/></svg>
<svg style="left:774.65px;top:769.55px" width="25.5" height="25.5" viewBox="0 0 100 100"><rect width="100" height="100" rx="22.5" fill="#faf6fa" /><path d="M16 26h68v42H16z" fill="#e83ad8"/><path d="M16 26h68L60 50 16 40z" fill="#f87ae8"/><path d="M40 76h20v8H40zM30 84h40v4H30z" fill="#9a8ae0"/></svg>
<svg style="left:807.45px;top:769.55px" width="25.5" height="25.5" viewBox="0 0 100 100"><rect width="100" height="100" rx="22.5" fill="#faf6fa" /><path d="M14 78V30l18 14 14-14 16 22 24 26z" fill="#f02ad0"/><path d="M62 60l20 4-8 14z" fill="#2a1a3a"/></svg>
<svg style="left:838.95px;top:769.55px" width="25.5" height="25.5" viewBox="0 0 100 100"><rect width="100" height="100" rx="22.5" fill="#fbfbfd" /><path d="M32 84V26h26c14 0 20 10 20 18s-6 18-20 18H44" stroke="#6d4aff" stroke-width="12" fill="none" stroke-linecap="round"/></svg>
<svg style="left:871.95px;top:769.55px" width="25.5" height="25.5" viewBox="0 0 100 100"><rect width="100" height="100" rx="22.5" fill="#8e9490" /><rect x="14" y="22" width="72" height="62" rx="14" fill="#5a9a48"/><rect x="4" y="44" width="14" height="20" rx="5" fill="#b8beb8"/><rect x="82" y="44" width="14" height="20" rx="5" fill="#b8beb8"/><path d="M24 36h20l-4 10H28zM56 36h20l-4 10H60z" fill="#2a3a28"/><rect x="40" y="56" width="20" height="20" rx="3" fill="#2e4e2a"/><circle cx="50" cy="63" r="4" fill="#9ad080"/></svg>
<svg style="left:904.25px;top:769.55px" width="25.5" height="25.5" viewBox="0 0 100 100"><rect width="100" height="100" rx="22.5" fill="url(#das)" /><defs><linearGradient id="das" x1="0" y1="0" x2="0" y2="1"><stop offset="0" stop-color="#1ab0fa"/><stop offset="1" stop-color="#1a6af0"/></linearGradient></defs><path d="M50 22L28 74M50 22l22 52M20 62h60" stroke="#fff" stroke-width="8" stroke-linecap="round" fill="none"/></svg>
<svg style="left:936.85px;top:769.55px" width="25.5" height="25.5" viewBox="0 0 100 100"><rect width="100" height="100" rx="22.5" fill="#fdb914" /><path d="M50 18c-14 0-22 10-22 20 0 8 4 12 8 18 2 4 3 8 3 12h22c0-4 1-8 3-12 4-6 8-10 8-18 0-10-8-20-22-20z" fill="#fde28a"/><rect x="40" y="72" width="20" height="10" rx="3" fill="#fde28a"/></svg>
<svg style="left:968.25px;top:769.55px" width="25.5" height="25.5" viewBox="0 0 100 100"><rect width="100" height="100" rx="22.5" fill="#8a8a8c" /><circle cx="50" cy="50" r="28" stroke="#b4b4b6" stroke-width="8" fill="none"/><circle cx="50" cy="50" r="10" fill="#b4b4b6"/><path d="M50 22v56M26 36l48 28M26 64l48-28" stroke="#b4b4b6" stroke-width="4"/></svg>
<svg style="left:1001.25px;top:769.55px" width="25.5" height="25.5" viewBox="0 0 100 100"><rect width="100" height="100" rx="22.5" fill="#d8c8a0" /><path d="M0 20L50 50 0 80z" fill="#c8321e"/><path d="M100 20L50 50l50 30z" fill="#c8321e"/><path d="M20 0l30 50L80 0z" fill="#f0e4c0"/><path d="M20 100l30-50 30 50z" fill="#e8a020"/><circle cx="50" cy="34" r="14" fill="#f4d8b8"/><path d="M34 30c4-14 28-14 32 0l-4 4H38z" fill="#2a2220"/><path d="M36 52h28l8 30H28z" fill="#b02818"/></svg>
<svg style="left:1033.75px;top:769.55px" width="25.5" height="25.5" viewBox="0 0 100 100"><rect width="100" height="100" rx="22.5" fill="#5865f2" /><path d="M28 32c14-6 30-6 44 0 8 12 12 26 12 40-6 4-12 6-18 8l-4-8c-8 2-16 2-24 0l-4 8c-6-2-12-4-18-8 0-14 4-28 12-40z" fill="#fff"/><ellipse cx="39" cy="54" rx="6.500" ry="7.500" fill="#5865f2"/><ellipse cx="61" cy="54" rx="6.500" ry="7.500" fill="#5865f2"/></svg>
<div class="abs" style="left:1050.5px;top:767px;width:11.5px;height:11.5px;background:#f03a36;border-radius:50%"></div>
<span class="abs abs" style="left:1050.5px;top:764.9px;line-height:16px;font-size:6.5px;letter-spacing:0;color:#fff;width:11.5px;text-align:center">16</span>
<div class="abs" style="left:1069.5px;top:767px;width:1px;height:31px;background:rgba(20,20,16,.55)"></div>
<svg style="left:1080.25px;top:769.55px" width="25.5" height="25.5" viewBox="0 0 100 100"><rect width="100" height="100" rx="22.5" fill="#262628" /><text x="50" y="40" font-family="Liberation Sans,sans-serif" font-weight="bold" font-size="30" text-anchor="middle" fill="#fff">tour</text><text x="50" y="66" font-family="Liberation Sans,sans-serif" font-weight="bold" font-size="30" text-anchor="middle" fill="#fff">box</text><rect x="12" y="74" width="76" height="16" rx="3" fill="#e8e8e8"/><text x="50" y="87" font-family="Liberation Sans,sans-serif" font-weight="bold" font-size="13" text-anchor="middle" fill="#222">CONSOLE</text></svg>
<svg style="left:1112.95px;top:769.55px" width="25.5" height="25.5" viewBox="0 0 100 100"><rect width="100" height="100" rx="22.5" fill="url(#dmu)" /><defs><linearGradient id="dmu" x1="0" y1="0" x2="0" y2="1"><stop offset="0" stop-color="#fb4a6a"/><stop offset="1" stop-color="#f8203e"/></linearGradient></defs><path d="M40 70V30l32-8v40" stroke="#fff" stroke-width="6" fill="none"/><path d="M40 30l32-8v10l-32 8z" fill="#fff"/><ellipse cx="33" cy="70" rx="10" ry="8" fill="#fff"/><ellipse cx="65" cy="62" rx="10" ry="8" fill="#fff"/></svg>
<svg style="left:1145.25px;top:769.55px" width="25.5" height="25.5" viewBox="0 0 100 100"><rect width="100" height="100" rx="22.5" fill="#ececec" /><path d="M70 26c-16-10-42-4-44 14s22 22 36 12 8-26-8-20-10 30 4 38 22 6 22 6" stroke="#141414" stroke-width="9" fill="none" stroke-linecap="round"/></svg>
<div class="abs" style="left:1181px;top:767px;width:1px;height:31px;background:rgba(20,20,16,.55)"></div>
<svg style="left:1192px;top:769.5px" width="26" height="25" viewBox="0 0 100 100"><path d="M4 14h32l6 8h54q4 0 4 4v66q0 4-4 4H4q-4 0-4-4V18q0-4 4-4z" fill="#3a9ad8"/><path d="M0 30h100v62q0 4-4 4H4q-4 0-4-4z" fill="#62bef4"/></svg>
<svg style="left:1226px;top:770.5px" width="23.5" height="25" viewBox="0 0 100 100"><defs><linearGradient id="dtr" x1="0" y1="0" x2="0" y2="1"><stop offset="0" stop-color="#5c5e58"/><stop offset="1" stop-color="#b4b6b0"/></linearGradient></defs><path d="M4 6h92l-9 86q-1 6-7 6H20q-6 0-7-6z" fill="url(#dtr)" stroke="#c4c6c0" stroke-width="3"/><ellipse cx="50" cy="7" rx="46" ry="5" fill="#7c7e78" stroke="#d0d2cc" stroke-width="3"/></svg>
<div class="abs" style="left:11.5px;top:797px;width:2.6px;height:2.6px;background:#0c0c0c;border-radius:50%"></div>
<div class="abs" style="left:108.5px;top:797px;width:2.6px;height:2.6px;background:#0c0c0c;border-radius:50%"></div>
<div class="abs" style="left:591.3px;top:797px;width:2.6px;height:2.6px;background:#0c0c0c;border-radius:50%"></div>
<div class="abs" style="left:623.7px;top:797px;width:2.6px;height:2.6px;background:#0c0c0c;border-radius:50%"></div>
<div class="abs" style="left:818.9px;top:797px;width:2.6px;height:2.6px;background:#0c0c0c;border-radius:50%"></div>
<div class="abs" style="left:1045.2px;top:797px;width:2.6px;height:2.6px;background:#0c0c0c;border-radius:50%"></div>
<div class="abs" style="left:1091.7px;top:797px;width:2.6px;height:2.6px;background:#0c0c0c;border-radius:50%"></div>

</div>

<!-- ============ overlays ============ -->
<div class="abs" style="left:374px;top:719px;width:109.2px;height:22.4px;background:#d6d6d6;border-radius:11.2px;box-shadow:0 1px 5px rgba(0,0,0,.22)"></div>
<svg style="left:422.9px;top:741.2px" width="13" height="5.4" viewBox="0 0 13 5.4"><path d="M0 0h13L7.500 4.800q-1 .9-2 0z" fill="#d6d6d6"/></svg>
<span class="abs abs" style="left:385.5px;top:722.8px;line-height:16px;font-size:12.6px;letter-spacing:-0.21px;color:#2e2e2e">Capture d’écran</span>
<svg style="left:440.2px;top:757.7px" width="12" height="17" viewBox="0 0 12 17"><path d="M1 1v13l3.200-2.800 2.300 5 2-.9-2.300-4.900H10.500z" fill="#111" stroke="#fff" stroke-width="1" stroke-linejoin="round"/></svg>
<div class="abs" style="left:963px;top:653.4px;width:43px;height:44px;background:rgba(190,190,190,.80);border-radius:9px 9px 0 0"></div>
<div class="abs" style="left:920.4px;top:696px;width:42.6px;height:42.6px;background:rgba(190,190,190,.80);border-radius:9px 0 0 9px"></div>
<div class="abs" style="left:1006px;top:696px;width:42.4px;height:42.6px;background:rgba(190,190,190,.80);border-radius:0 9px 9px 0"></div>
<div class="abs" style="left:963px;top:737.2px;width:43px;height:43px;background:rgba(190,190,190,.80);border-radius:0 0 9px 9px"></div>
<div class="abs" style="left:963px;top:697.4px;width:43px;height:39.8px;background:rgba(190,190,190,.80)"></div>
<svg style="left:971px;top:703.5px" width="24" height="24" viewBox="0 0 24 24"><circle cx="12" cy="12" r="10.500" fill="rgba(200,200,200,.5)" stroke="#a2a2a2" stroke-width="2"/></svg>
<span class="abs abs" style="left:965.8px;top:659.2px;line-height:16px;font-size:13.6px;letter-spacing:-0.42px;color:#5c5c5c">Eraser</span>
<span class="abs abs" style="left:965.8px;top:674px;line-height:16px;font-size:13.6px;letter-spacing:0.02px;color:#5c5c5c">Tool</span>
<span class="abs abs" style="left:922.4px;top:699.3px;line-height:16px;font-size:9.6px;letter-spacing:-0.15px;color:#6c6c6c">Current /</span>
<span class="abs abs" style="left:922.4px;top:709.3px;line-height:16px;font-size:9.6px;letter-spacing:-0.29px;color:#6c6c6c">Previous</span>
<span class="abs abs" style="left:922.4px;top:719.3px;line-height:16px;font-size:9.6px;letter-spacing:-0.29px;color:#6c6c6c">Preset</span>
<span class="abs abs" style="left:1009.5px;top:703.5px;line-height:16px;font-size:4.6px;letter-spacing:0.16px;color:#777">-- Foreground /</span>
<span class="abs abs" style="left:1011.5px;top:708.7px;line-height:16px;font-size:4.6px;letter-spacing:0.05px;color:#777">Background</span>
<span class="abs abs" style="left:1011.5px;top:713.9px;line-height:16px;font-size:4.6px;letter-spacing:0.08px;color:#777">Toggle</span>
<span class="abs abs" style="left:966.4px;top:741.3px;line-height:16px;font-size:9.6px;letter-spacing:-0.25px;color:#5e5e5e">F6 --</span>
<span class="abs abs" style="left:966.4px;top:752.5px;line-height:16px;font-size:9.6px;letter-spacing:-0.29px;color:#5e5e5e">Preset</span>
<span class="abs abs" style="left:966.4px;top:763.7px;line-height:16px;font-size:9.6px;letter-spacing:-0.11px;color:#5e5e5e">Chooser</span>

</body>
</html>
